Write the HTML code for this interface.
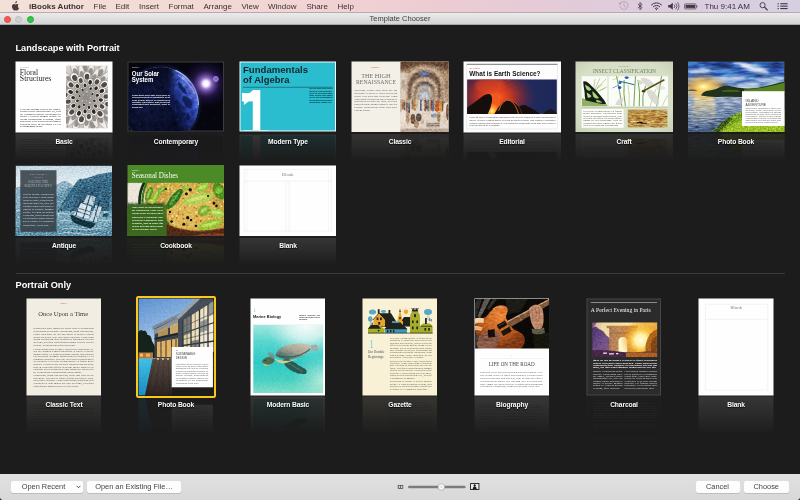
<!DOCTYPE html>
<html><head><meta charset="utf-8"><title>Template Chooser</title>
<style>
*{margin:0;padding:0;box-sizing:border-box}
html,body{width:800px;height:500px;overflow:hidden;background:#1c1c1c;font-family:"Liberation Sans",sans-serif;}
#root{position:absolute;left:0;top:0;width:800px;height:500px;will-change:transform;overflow:hidden}
#menubar{position:absolute;left:0;top:0;width:800px;height:13px;background:linear-gradient(90deg,#f3e1d8 0%,#f2dbd5 20%,#f1d3d3 40%,#ecccd3 55%,#e3cbd8 70%,#dacde0 85%,#d6cfe2 100%);border-bottom:1px solid #b9a9ad;}
#menubar span{position:absolute;top:1.5px;font-size:8px;line-height:10px;color:#3b3033;white-space:nowrap;}
#menubar span.b{font-weight:bold;}
#titlebar{position:absolute;left:0;top:13px;width:800px;height:12px;background:linear-gradient(#ebebeb,#d3d3d3);border-bottom:1px solid #a8a8a8;}
#titlebar .t{position:absolute;left:0;width:800px;text-align:center;top:1px;font-size:7.5px;line-height:10px;color:#404040;}
.tl{position:absolute;top:2.5px;width:7px;height:7px;border-radius:50%;}
#content{position:absolute;left:0;top:25px;width:800px;height:449px;background:#1c1c1c;}
h2{position:absolute;left:15.5px;font-size:9.2px;font-weight:bold;color:#fff;line-height:12px;white-space:nowrap;}
#sep{position:absolute;left:16px;top:247.5px;width:769px;height:1px;background:#3b3b3b;}
.th{position:absolute;-webkit-box-reflect:below 0 linear-gradient(to bottom,rgba(255,255,255,0) 0%,rgba(255,255,255,0) 60%,rgba(255,255,255,0.12) 100%);}
.th svg{display:block}
.land{width:97px;height:71px;}
.port{width:75px;height:97px;}
.lbl{position:absolute;font-size:6.7px;font-weight:bold;color:#fbfbfb;text-align:center;line-height:9px;white-space:nowrap;text-shadow:0 0.5px 1px rgba(0,0,0,0.8);letter-spacing:-0.12px;}
#bottombar{position:absolute;left:0;top:474px;width:800px;height:26px;background:linear-gradient(#e1e1e1,#d8d8d8);border-radius:0 0 3px 3px;}
.btn{position:absolute;top:6.5px;height:12px;background:#fdfdfd;border-radius:2px;box-shadow:0 0.5px 0.5px rgba(0,0,0,0.25);font-size:7.4px;line-height:12px;color:#444;text-align:center;white-space:nowrap;}
</style></head>
<body>
<div id="root">
<div id="menubar">
<svg style="position:absolute;left:11px;top:1px" width="9" height="10" viewBox="0 0 9 10"><path d="M6.1 0.1c0.05 0.6-0.2 1.15-0.55 1.55-0.35 0.4-0.9 0.7-1.4 0.65-0.07-0.55 0.2-1.1 0.5-1.45C5 0.45 5.6 0.15 6.1 0.1zM7.9 3.5c-0.1 0.05-1.05 0.6-1.05 1.75 0 1.35 1.2 1.8 1.2 1.8 0 0.05-0.2 0.65-0.6 1.3C7.05 8.9 6.7 9.5 6.1 9.5c-0.55 0-0.75-0.35-1.4-0.35-0.65 0-0.85 0.35-1.4 0.35-0.55 0-0.95-0.55-1.35-1.15C1.1 7.15 0.6 5.3 1.3 4.1c0.35-0.65 1-1.05 1.7-1.05 0.55 0 1.05 0.4 1.4 0.4 0.3 0 0.9-0.45 1.6-0.4 0.3 0 1.1 0.1 1.6 0.85z" fill="#4a3c3e"/></svg>
<span class="b" style="left:29px">iBooks Author</span>
<span style="left:93.5px">File</span>
<span style="left:115.5px">Edit</span>
<span style="left:139px">Insert</span>
<span style="left:168.5px">Format</span>
<span style="left:203.5px">Arrange</span>
<span style="left:241.5px">View</span>
<span style="left:268px">Window</span>
<span style="left:306.5px">Share</span>
<span style="left:337.5px">Help</span>
<span style="left:704.5px">Thu 9:41 AM</span>
<svg style="position:absolute;left:616px;top:0" width="176" height="13" viewBox="616 0 176 13">
<g fill="none" stroke="#b3a3ab" stroke-width="0.9" stroke-linecap="round"><path d="M620.3 3.6 A4.1 4.1 0 1 1 620 6.6"/><path d="M624 3.2 V5.7 L625.9 7"/></g><path d="M618.6 2.6 L621.6 2.9 L620 5.4Z" fill="#b3a3ab"/>
<path d="M637.8 4 L642 7.6 L640 9.8 V2.4 L642 4.5 L637.8 8.2" fill="none" stroke="#43383c" stroke-width="0.8" stroke-linejoin="round"/>
<g fill="none" stroke="#43383c" stroke-width="1" stroke-linecap="butt"><path d="M651.2 5.2 A7.2 7.2 0 0 1 661.8 5.2"/><path d="M653 7 A4.8 4.8 0 0 1 660 7"/><path d="M654.9 8.6 A2.4 2.4 0 0 1 658.1 8.6"/></g><circle cx="656.5" cy="9.6" r="0.7" fill="#43383c"/>
<path d="M668.2 5 H670 L672.8 2.8 V9.8 L670 7.6 H668.2Z" fill="#43383c"/><g fill="none" stroke="#43383c" stroke-width="0.75" stroke-linecap="round"><path d="M674.4 4.9 A2 2 0 0 1 674.4 7.7"/><path d="M676 3.7 A3.8 3.8 0 0 1 676 8.9"/><path d="M677.7 2.6 A5.6 5.6 0 0 1 677.7 10"/></g>
<rect x="684.6" y="3.9" width="11.4" height="5" rx="0.8" fill="none" stroke="#43383c" stroke-width="0.7"/><rect x="685.6" y="4.9" width="9.4" height="3" fill="#43383c"/><rect x="696.4" y="5.4" width="0.9" height="2" rx="0.3" fill="#43383c"/>
<circle cx="762.6" cy="5.2" r="2.6" fill="none" stroke="#43383c" stroke-width="0.9"/><path d="M764.5 7.2 L767.3 10" stroke="#43383c" stroke-width="1.1" stroke-linecap="round"/>
<g fill="#43383c"><rect x="777.6" y="3.2" width="1.2" height="1.1"/><rect x="777.6" y="5.6" width="1.2" height="1.1"/><rect x="777.6" y="8" width="1.2" height="1.1"/><rect x="780.3" y="3.2" width="7.3" height="1.1"/><rect x="780.3" y="5.6" width="7.3" height="1.1"/><rect x="780.3" y="8" width="7.3" height="1.1"/></g>
</svg>

</div>
<div id="titlebar">
<div class="tl" style="left:4px;background:#fc5753;border:0.5px solid #df4744"></div>
<div class="tl" style="left:15px;background:#d0d0d0;border:0.5px solid #bdbdbd"></div>
<div class="tl" style="left:26.5px;background:#33c748;border:0.5px solid #27aa35"></div>
<div class="t">Template Chooser</div>
</div>
<div id="content">
<h2 style="top:17px">Landscape with Portrait</h2>
<h2 style="top:254px">Portrait Only</h2>
<div id="sep"></div>
</div>
<div class="th" style="left:15px;top:61px;width:98px;height:72px"><svg width="98" height="72" viewBox="15 61 98 72"><defs><clipPath id="c1"><rect x="66" y="65.7" width="41.7" height="62.5"/></clipPath><radialGradient id="g1" cx="0.48" cy="0.5" r="0.7"><stop offset="0" stop-color="#8e8882"/><stop offset="0.5" stop-color="#b9b4ae"/><stop offset="1" stop-color="#dedad5"/></radialGradient><filter id="b1"><feGaussianBlur stdDeviation="0.3"/></filter></defs><rect x="15.5" y="61.5" width="97" height="71" fill="#fefefe"/><rect x="66" y="65.7" width="41.7" height="62.5" fill="url(#g1)"/><g clip-path="url(#c1)"><g filter="url(#b1)"><g transform="translate(52.38 96.04) rotate(10622.5)"><path d="M-8.44 0 Q-2.25 -7.03 12.38 0 Q-2.25 7.03 -8.44 0Z" fill="#efedea" stroke="#857e78" stroke-width="0.45"/><ellipse cx="-3.10" rx="4.22" ry="2.53" fill="#5b534e" opacity="0.6"/></g><g transform="translate(109.92 121.19) rotate(10485.0)"><path d="M-8.37 0 Q-2.23 -6.97 12.27 0 Q-2.23 6.97 -8.37 0Z" fill="#efedea" stroke="#857e78" stroke-width="0.45"/><ellipse cx="-3.07" rx="4.18" ry="2.51" fill="#5b534e" opacity="0.6"/></g><g transform="translate(84.73 64.34) rotate(10347.5)"><path d="M-8.29 0 Q-2.21 -6.91 12.16 0 Q-2.21 6.91 -8.29 0Z" fill="#efedea" stroke="#857e78" stroke-width="0.45"/><ellipse cx="-3.04" rx="4.15" ry="2.49" fill="#5b534e" opacity="0.6"/></g><g transform="translate(65.09 122.70) rotate(10210.0)"><path d="M-8.22 0 Q-2.19 -6.85 12.06 0 Q-2.19 6.85 -8.22 0Z" fill="#efedea" stroke="#857e78" stroke-width="0.45"/><ellipse cx="-3.01" rx="4.11" ry="2.47" fill="#5b534e" opacity="0.6"/></g><g transform="translate(118.46 93.22) rotate(10072.4)"><path d="M-8.15 0 Q-2.17 -6.79 11.95 0 Q-2.17 6.79 -8.15 0Z" fill="#efedea" stroke="#857e78" stroke-width="0.45"/><ellipse cx="-2.99" rx="4.07" ry="2.44" fill="#5b534e" opacity="0.6"/></g><g transform="translate(59.80 79.06) rotate(9934.9)"><path d="M-8.07 0 Q-2.15 -6.73 11.84 0 Q-2.15 6.73 -8.07 0Z" fill="#efedea" stroke="#857e78" stroke-width="0.45"/><ellipse cx="-2.96" rx="4.04" ry="2.42" fill="#5b534e" opacity="0.6"/></g><g transform="translate(93.14 128.61) rotate(9797.4)"><path d="M-8.00 0 Q-2.13 -6.66 11.73 0 Q-2.13 6.66 -8.00 0Z" fill="#efedea" stroke="#857e78" stroke-width="0.45"/><ellipse cx="-2.93" rx="4.00" ry="2.40" fill="#5b534e" opacity="0.6"/></g><g transform="translate(101.93 70.16) rotate(9659.9)"><path d="M-7.92 0 Q-2.11 -6.60 11.62 0 Q-2.11 6.60 -7.92 0Z" fill="#efedea" stroke="#857e78" stroke-width="0.45"/><ellipse cx="-2.90" rx="3.96" ry="2.38" fill="#5b534e" opacity="0.6"/></g><g transform="translate(56.45 106.93) rotate(9522.4)"><path d="M-7.85 0 Q-2.09 -6.54 11.51 0 Q-2.09 6.54 -7.85 0Z" fill="#efedea" stroke="#857e78" stroke-width="0.45"/><ellipse cx="-2.88" rx="3.92" ry="2.35" fill="#5b534e" opacity="0.6"/></g><g transform="translate(114.20 110.50) rotate(9384.9)"><path d="M-7.77 0 Q-2.07 -6.48 11.40 0 Q-2.07 6.48 -7.77 0Z" fill="#efedea" stroke="#857e78" stroke-width="0.45"/><ellipse cx="-2.85" rx="3.89" ry="2.33" fill="#5b534e" opacity="0.6"/></g><g transform="translate(74.46 69.31) rotate(9247.4)"><path d="M-7.70 0 Q-2.05 -6.41 11.29 0 Q-2.05 6.41 -7.70 0Z" fill="#efedea" stroke="#857e78" stroke-width="0.45"/><ellipse cx="-2.82" rx="3.85" ry="2.31" fill="#5b534e" opacity="0.6"/></g><g transform="translate(75.93 125.90) rotate(9109.9)"><path d="M-7.62 0 Q-2.03 -6.35 11.18 0 Q-2.03 6.35 -7.62 0Z" fill="#efedea" stroke="#857e78" stroke-width="0.45"/><ellipse cx="-2.79" rx="3.81" ry="2.29" fill="#5b534e" opacity="0.6"/></g><g transform="translate(112.66 83.66) rotate(8972.4)"><path d="M-7.54 0 Q-2.01 -6.29 11.06 0 Q-2.01 6.29 -7.54 0Z" fill="#efedea" stroke="#857e78" stroke-width="0.45"/><ellipse cx="-2.77" rx="3.77" ry="2.26" fill="#5b534e" opacity="0.6"/></g><g transform="translate(57.67 89.92) rotate(8834.9)"><path d="M-7.47 0 Q-1.99 -6.22 10.95 0 Q-1.99 6.22 -7.47 0Z" fill="#efedea" stroke="#857e78" stroke-width="0.45"/><ellipse cx="-2.74" rx="3.73" ry="2.24" fill="#5b534e" opacity="0.6"/></g><g transform="translate(101.93 122.07) rotate(8697.4)"><path d="M-7.39 0 Q-1.97 -6.16 10.84 0 Q-1.97 6.16 -7.39 0Z" fill="#efedea" stroke="#857e78" stroke-width="0.45"/><ellipse cx="-2.71" rx="3.69" ry="2.22" fill="#5b534e" opacity="0.6"/></g><g transform="translate(91.14 69.09) rotate(8559.9)"><path d="M-7.31 0 Q-1.95 -6.09 10.73 0 Q-1.95 6.09 -7.31 0Z" fill="#efedea" stroke="#857e78" stroke-width="0.45"/><ellipse cx="-2.68" rx="3.66" ry="2.19" fill="#5b534e" opacity="0.6"/></g><g transform="translate(63.64 114.90) rotate(8422.4)"><path d="M-7.24 0 Q-1.93 -6.03 10.61 0 Q-1.93 6.03 -7.24 0Z" fill="#efedea" stroke="#857e78" stroke-width="0.45"/><ellipse cx="-2.65" rx="3.62" ry="2.17" fill="#5b534e" opacity="0.6"/></g><g transform="translate(114.24 99.88) rotate(8284.8)"><path d="M-7.16 0 Q-1.91 -5.96 10.50 0 Q-1.91 5.96 -7.16 0Z" fill="#efedea" stroke="#857e78" stroke-width="0.45"/><ellipse cx="-2.62" rx="3.58" ry="2.15" fill="#5b534e" opacity="0.6"/></g><g transform="translate(67.36 77.06) rotate(8147.3)"><path d="M-7.08 0 Q-1.89 -5.90 10.38 0 Q-1.89 5.90 -7.08 0Z" fill="#efedea" stroke="#857e78" stroke-width="0.45"/><ellipse cx="-2.60" rx="3.54" ry="2.12" fill="#5b534e" opacity="0.6"/></g><g transform="translate(86.28 124.95) rotate(8009.8)"><path d="M-7.00 0 Q-1.87 -5.83 10.27 0 Q-1.87 5.83 -7.00 0Z" fill="#efedea" stroke="#857e78" stroke-width="0.45"/><ellipse cx="-2.57" rx="3.50" ry="2.10" fill="#5b534e" opacity="0.6"/></g><g transform="translate(104.44 77.47) rotate(7872.3)"><path d="M-6.92 0 Q-1.85 -5.77 10.15 0 Q-1.85 5.77 -6.92 0Z" fill="#efedea" stroke="#857e78" stroke-width="0.45"/><ellipse cx="-2.54" rx="3.46" ry="2.08" fill="#5b534e" opacity="0.6"/></g><g transform="translate(59.57 99.92) rotate(7734.8)"><path d="M-6.84 0 Q-1.82 -5.70 10.03 0 Q-1.82 5.70 -6.84 0Z" fill="#efedea" stroke="#857e78" stroke-width="0.45"/><ellipse cx="-2.51" rx="3.42" ry="2.05" fill="#5b534e" opacity="0.6"/></g><g transform="translate(107.19 113.49) rotate(7597.3)"><path d="M-6.76 0 Q-1.80 -5.64 9.92 0 Q-1.80 5.64 -6.76 0Z" fill="#efedea" stroke="#857e78" stroke-width="0.45"/><ellipse cx="-2.48" rx="3.38" ry="2.03" fill="#5b534e" opacity="0.6"/></g><g transform="translate(81.59 71.88) rotate(7459.8)"><path d="M-6.68 0 Q-1.78 -5.57 9.80 0 Q-1.78 5.57 -6.68 0Z" fill="#efedea" stroke="#857e78" stroke-width="0.45"/><ellipse cx="-2.45" rx="3.34" ry="2.00" fill="#5b534e" opacity="0.6"/></g><g transform="translate(72.48 119.20) rotate(7322.3)"><path d="M-6.60 0 Q-1.76 -5.50 9.68 0 Q-1.76 5.50 -6.60 0Z" fill="#efedea" stroke="#857e78" stroke-width="0.45"/><ellipse cx="-2.42" rx="3.30" ry="1.98" fill="#5b534e" opacity="0.6"/></g><g transform="translate(110.63 90.85) rotate(7184.8)"><path d="M-6.52 0 Q-1.74 -5.43 9.56 0 Q-1.74 5.43 -6.52 0Z" fill="#efedea" stroke="#857e78" stroke-width="0.45"/><ellipse cx="-2.39" rx="3.26" ry="1.96" fill="#5b534e" opacity="0.6"/></g><g transform="translate(64.02 86.07) rotate(7047.3)"><path d="M-6.44 0 Q-1.72 -5.37 9.44 0 Q-1.72 5.37 -6.44 0Z" fill="#efedea" stroke="#857e78" stroke-width="0.45"/><ellipse cx="-2.36" rx="3.22" ry="1.93" fill="#5b534e" opacity="0.6"/></g><g transform="translate(94.71 120.57) rotate(6909.8)"><path d="M-6.36 0 Q-1.70 -5.30 9.33 0 Q-1.70 5.30 -6.36 0Z" fill="#efedea" stroke="#857e78" stroke-width="0.45"/><ellipse cx="-2.33" rx="3.18" ry="1.91" fill="#5b534e" opacity="0.6"/></g><g transform="translate(95.38 75.08) rotate(6772.3)"><path d="M-6.28 0 Q-1.67 -5.23 9.20 0 Q-1.67 5.23 -6.28 0Z" fill="#efedea" stroke="#857e78" stroke-width="0.45"/><ellipse cx="-2.30" rx="3.14" ry="1.88" fill="#5b534e" opacity="0.6"/></g><g transform="translate(64.62 107.68) rotate(6634.8)"><path d="M-6.19 0 Q-1.65 -5.16 9.08 0 Q-1.65 5.16 -6.19 0Z" fill="#efedea" stroke="#857e78" stroke-width="0.45"/><ellipse cx="-2.27" rx="3.10" ry="1.86" fill="#5b534e" opacity="0.6"/></g><g transform="translate(108.63 104.46) rotate(6497.2)"><ellipse rx="4.97" ry="4.16" fill="#f8f7f4" stroke="#6f6862" stroke-width="0.45"/><ellipse cx="-0.49" rx="3.18" ry="2.53" fill="#241f1c" opacity="0.8"/></g><g transform="translate(74.55 77.53) rotate(6359.7)"><ellipse rx="4.90" ry="4.10" fill="#f8f7f4" stroke="#6f6862" stroke-width="0.45"/><ellipse cx="-0.48" rx="3.13" ry="2.49" fill="#241f1c" opacity="0.8"/></g><g transform="translate(81.38 119.73) rotate(6222.2)"><ellipse rx="4.83" ry="4.04" fill="#f8f7f4" stroke="#6f6862" stroke-width="0.45"/><ellipse cx="-0.48" rx="3.09" ry="2.46" fill="#241f1c" opacity="0.8"/></g><g transform="translate(104.46 84.58) rotate(6084.7)"><ellipse rx="4.76" ry="3.98" fill="#f8f7f4" stroke="#6f6862" stroke-width="0.45"/><ellipse cx="-0.47" rx="3.05" ry="2.42" fill="#241f1c" opacity="0.8"/></g><g transform="translate(64.38 94.74) rotate(5947.2)"><ellipse rx="4.70" ry="3.93" fill="#f8f7f4" stroke="#6f6862" stroke-width="0.45"/><ellipse cx="-0.46" rx="3.00" ry="2.39" fill="#241f1c" opacity="0.8"/></g><g transform="translate(100.18 113.99) rotate(5809.7)"><ellipse rx="4.63" ry="3.87" fill="#f8f7f4" stroke="#6f6862" stroke-width="0.45"/><ellipse cx="-0.46" rx="2.96" ry="2.35" fill="#241f1c" opacity="0.8"/></g><g transform="translate(87.01 76.28) rotate(5672.2)"><ellipse rx="4.56" ry="3.81" fill="#f8f7f4" stroke="#6f6862" stroke-width="0.45"/><ellipse cx="-0.45" rx="2.91" ry="2.32" fill="#241f1c" opacity="0.8"/></g><g transform="translate(71.54 112.32) rotate(5534.7)"><ellipse rx="4.49" ry="3.75" fill="#f8f7f4" stroke="#6f6862" stroke-width="0.45"/><ellipse cx="-0.44" rx="2.87" ry="2.28" fill="#241f1c" opacity="0.8"/></g><g transform="translate(106.64 96.49) rotate(5397.2)"><ellipse rx="4.42" ry="3.69" fill="#f8f7f4" stroke="#6f6862" stroke-width="0.45"/><ellipse cx="-0.43" rx="2.82" ry="2.24" fill="#241f1c" opacity="0.8"/></g><g transform="translate(70.75 84.69) rotate(5259.7)"><ellipse rx="4.34" ry="3.63" fill="#f8f7f4" stroke="#6f6862" stroke-width="0.45"/><ellipse cx="-0.43" rx="2.78" ry="2.21" fill="#241f1c" opacity="0.8"/></g><g transform="translate(88.88 117.00) rotate(5122.2)"><ellipse rx="4.27" ry="3.57" fill="#f8f7f4" stroke="#6f6862" stroke-width="0.45"/><ellipse cx="-0.42" rx="2.73" ry="2.17" fill="#241f1c" opacity="0.8"/></g><g transform="translate(97.17 81.64) rotate(4984.7)"><ellipse rx="4.20" ry="3.51" fill="#f8f7f4" stroke="#6f6862" stroke-width="0.45"/><ellipse cx="-0.41" rx="2.69" ry="2.13" fill="#241f1c" opacity="0.8"/></g><g transform="translate(67.79 101.70) rotate(4847.1)"><ellipse rx="4.13" ry="3.45" fill="#f8f7f4" stroke="#6f6862" stroke-width="0.45"/><ellipse cx="-0.41" rx="2.64" ry="2.10" fill="#241f1c" opacity="0.8"/></g><g transform="translate(102.27 106.64) rotate(4709.6)"><ellipse rx="4.05" ry="3.39" fill="#f8f7f4" stroke="#6f6862" stroke-width="0.45"/><ellipse cx="-0.40" rx="2.59" ry="2.06" fill="#241f1c" opacity="0.8"/></g><g transform="translate(80.65 80.29) rotate(4572.1)"><ellipse rx="3.98" ry="3.33" fill="#f8f7f4" stroke="#6f6862" stroke-width="0.45"/><ellipse cx="-0.39" rx="2.54" ry="2.02" fill="#241f1c" opacity="0.8"/></g><g transform="translate(78.84 113.57) rotate(4434.6)"><ellipse rx="3.91" ry="3.27" fill="#f8f7f4" stroke="#6f6862" stroke-width="0.45"/><ellipse cx="-0.38" rx="2.50" ry="1.98" fill="#241f1c" opacity="0.95"/></g><g transform="translate(102.11 90.79) rotate(4297.1)"><ellipse rx="3.83" ry="3.20" fill="#f8f7f4" stroke="#6f6862" stroke-width="0.45"/><ellipse cx="-0.38" rx="2.45" ry="1.95" fill="#241f1c" opacity="0.95"/></g><g transform="translate(70.33 91.84) rotate(4159.6)"><ellipse rx="3.75" ry="3.14" fill="#f8f7f4" stroke="#6f6862" stroke-width="0.45"/><ellipse cx="-0.37" rx="2.40" ry="1.91" fill="#241f1c" opacity="0.95"/></g><g transform="translate(93.89 112.02) rotate(4022.1)"><ellipse rx="3.68" ry="3.08" fill="#f8f7f4" stroke="#6f6862" stroke-width="0.45"/><ellipse cx="-0.36" rx="2.35" ry="1.87" fill="#241f1c" opacity="0.95"/></g><g transform="translate(90.23 82.01) rotate(3884.6)"><ellipse rx="3.60" ry="3.01" fill="#f8f7f4" stroke="#6f6862" stroke-width="0.45"/><ellipse cx="-0.35" rx="2.30" ry="1.83" fill="#241f1c" opacity="0.95"/></g><g transform="translate(73.12 105.97) rotate(3747.1)"><ellipse rx="3.52" ry="2.95" fill="#f8f7f4" stroke="#6f6862" stroke-width="0.45"/><ellipse cx="-0.35" rx="2.25" ry="1.79" fill="#241f1c" opacity="0.95"/></g><g transform="translate(101.15 100.02) rotate(3609.6)"><ellipse rx="3.44" ry="2.88" fill="#f8f7f4" stroke="#6f6862" stroke-width="0.45"/><ellipse cx="-0.34" rx="2.20" ry="1.75" fill="#241f1c" opacity="0.95"/></g><g transform="translate(77.15 85.89) rotate(3472.1)"><ellipse rx="3.37" ry="2.81" fill="#f8f7f4" stroke="#6f6862" stroke-width="0.45"/><ellipse cx="-0.33" rx="2.15" ry="1.71" fill="#241f1c" opacity="0.95"/></g><g transform="translate(85.06 111.74) rotate(3334.6)"><ellipse rx="3.29" ry="2.75" fill="#f8f7f4" stroke="#6f6862" stroke-width="0.45"/><ellipse cx="-0.32" rx="2.10" ry="1.67" fill="#241f1c" opacity="0.95"/></g><g transform="translate(96.33 88.07) rotate(3197.1)"><ellipse rx="3.20" ry="2.68" fill="#f8f7f4" stroke="#6f6862" stroke-width="0.45"/><ellipse cx="-0.32" rx="2.05" ry="1.63" fill="#241f1c" opacity="0.95"/></g><g transform="translate(72.81 97.61) rotate(3059.5)"><ellipse rx="3.12" ry="2.61" fill="#f8f7f4" stroke="#6f6862" stroke-width="0.45"/><ellipse cx="-0.31" rx="2.00" ry="1.59" fill="#241f1c" opacity="0.95"/></g><g transform="translate(95.81 106.17) rotate(2922.0)"><ellipse rx="3.04" ry="2.54" fill="#f8f7f4" stroke="#6f6862" stroke-width="0.45"/><ellipse cx="-0.30" rx="1.94" ry="1.54" fill="#241f1c" opacity="0.95"/></g><g transform="translate(85.01 85.07) rotate(2784.5)"><ellipse rx="2.96" ry="2.47" fill="#f8f7f4" stroke="#6f6862" stroke-width="0.45"/><ellipse cx="-0.29" rx="1.89" ry="1.50" fill="#241f1c" opacity="0.95"/></g><g transform="translate(78.96 107.09) rotate(2647.0)"><ellipse rx="2.87" ry="2.40" fill="#f8f7f4" stroke="#6f6862" stroke-width="0.45"/><ellipse cx="-0.28" rx="1.84" ry="1.46" fill="#241f1c" opacity="0.95"/></g><g transform="translate(97.55 95.40) rotate(2509.5)"><ellipse rx="2.78" ry="2.33" fill="#f8f7f4" stroke="#6f6862" stroke-width="0.45"/><ellipse cx="-0.27" rx="1.78" ry="1.41" fill="#241f1c" opacity="0.95"/></g><g transform="translate(76.81 91.63) rotate(2372.0)"><ellipse rx="2.70" ry="2.25" fill="#f8f7f4" stroke="#6f6862" stroke-width="0.45"/><ellipse cx="-0.27" rx="1.72" ry="1.37" fill="#241f1c" opacity="0.95"/></g><g transform="translate(89.03 107.70) rotate(2234.5)"><ellipse rx="2.61" ry="2.18" fill="#f8f7f4" stroke="#6f6862" stroke-width="0.45"/><ellipse cx="-0.26" rx="1.67" ry="1.33" fill="#241f1c" opacity="0.95"/></g><g transform="translate(90.78 88.51) rotate(2097.0)"><ellipse rx="2.52" ry="2.10" fill="#f8f7f4" stroke="#6f6862" stroke-width="0.45"/><ellipse cx="-0.25" rx="1.61" ry="1.28" fill="#241f1c" opacity="0.95"/></g><g transform="translate(77.22 100.86) rotate(1959.5)"><ellipse rx="2.43" ry="2.03" fill="#f8f7f4" stroke="#6f6862" stroke-width="0.45"/><ellipse cx="-0.24" rx="1.55" ry="1.23" fill="#241f1c" opacity="0.95"/></g><g transform="translate(94.62 100.90) rotate(1822.0)"><ellipse rx="2.33" ry="1.95" fill="#f8f7f4" stroke="#6f6862" stroke-width="0.45"/><ellipse cx="-0.23" rx="1.49" ry="1.18" fill="#241f1c" opacity="0.95"/></g><g transform="translate(82.51 89.78) rotate(1684.5)"><ellipse rx="2.24" ry="1.87" fill="#f8f7f4" stroke="#6f6862" stroke-width="0.45"/><ellipse cx="-0.22" rx="1.43" ry="1.14" fill="#241f1c" opacity="0.95"/></g><g transform="translate(83.86 105.17) rotate(1547.0)"><ellipse rx="2.14" ry="1.79" fill="#f8f7f4" stroke="#6f6862" stroke-width="0.45"/><ellipse cx="-0.21" rx="1.37" ry="1.09" fill="#241f1c" opacity="0.95"/></g><g transform="translate(92.64 93.70) rotate(1409.5)"><ellipse rx="2.04" ry="1.70" fill="#f8f7f4" stroke="#6f6862" stroke-width="0.45"/><ellipse cx="-0.20" rx="1.30" ry="1.04" fill="#241f1c" opacity="0.95"/></g><g transform="translate(79.44 96.07) rotate(1271.9)"><ellipse rx="1.94" ry="1.62" fill="#f8f7f4" stroke="#6f6862" stroke-width="0.45"/><ellipse cx="-0.19" rx="1.24" ry="0.98" fill="#241f1c" opacity="0.95"/></g><circle cx="89.88" cy="102.65" r="1.28" fill="#e4e1dc" stroke="#6d665f" stroke-width="0.45"/><circle cx="86.89" cy="91.80" r="1.20" fill="#e4e1dc" stroke="#6d665f" stroke-width="0.45"/><circle cx="82.31" cy="100.83" r="1.12" fill="#e4e1dc" stroke="#6d665f" stroke-width="0.45"/><circle cx="90.67" cy="97.65" r="1.04" fill="#e4e1dc" stroke="#6d665f" stroke-width="0.45"/><circle cx="83.49" cy="94.85" r="0.95" fill="#e4e1dc" stroke="#6d665f" stroke-width="0.45"/><circle cx="86.37" cy="100.56" r="0.86" fill="#e4e1dc" stroke="#6d665f" stroke-width="0.45"/><circle cx="87.64" cy="95.74" r="0.76" fill="#e4e1dc" stroke="#6d665f" stroke-width="0.45"/></g></g><text x="20" y="67.8" font-family='"Liberation Sans",sans-serif' font-size="1.6" fill="#999">CHAPTER 1</text><g font-family='"Liberation Serif",serif' font-size="7.8" fill="#262626"><text x="19.8" y="74.6" textLength="18.2" lengthAdjust="spacingAndGlyphs">Floral</text><text x="19.8" y="81.4" textLength="31.6" lengthAdjust="spacingAndGlyphs">Structures</text></g><g font-family='"Liberation Serif",serif' font-size="2.5" fill="#1a1a1a" font-weight="normal" opacity="1"><text x="20.00" y="110.00" textLength="41.00" lengthAdjust="spacingAndGlyphs">Lorem ipsum dolor sit amet,</text><text x="20.00" y="112.47" textLength="41.00" lengthAdjust="spacingAndGlyphs">consectetur adipiscing elit, sed</text><text x="20.00" y="114.94" textLength="41.00" lengthAdjust="spacingAndGlyphs">do eiusmod tempor incididunt ut</text><text x="20.00" y="117.41" textLength="41.00" lengthAdjust="spacingAndGlyphs">labore et dolore magna aliqua. Ut</text><text x="20.00" y="119.89" textLength="41.00" lengthAdjust="spacingAndGlyphs">enim ad minim veniam, quis</text><text x="20.00" y="122.36" textLength="41.00" lengthAdjust="spacingAndGlyphs">nostrud exercitation ullamco</text><text x="20.00" y="124.83" textLength="41.00" lengthAdjust="spacingAndGlyphs">laboris nisi ut aliquip ex ea</text><text x="20.00" y="127.30" textLength="22.55" lengthAdjust="spacingAndGlyphs">commodo</text></g></svg></div>
<div class="lbl" style="left:24.0px;top:136.9px;width:80px">Basic</div>
<div class="th" style="left:127px;top:61px;width:98px;height:72px"><svg width="98" height="72" viewBox="127 61 98 72"><defs><clipPath id="c2"><rect x="128.5" y="62.5" width="94.5" height="68.5"/></clipPath><clipPath id="c2e"><circle cx="160.5" cy="105" r="38"/></clipPath><linearGradient id="g2e" gradientUnits="userSpaceOnUse" x1="166" y1="112" x2="199" y2="92"><stop offset="0" stop-color="#0b1030"/><stop offset="0.3" stop-color="#131c54"/><stop offset="0.55" stop-color="#253a98"/><stop offset="0.8" stop-color="#4262d0"/><stop offset="1" stop-color="#7e9af0"/></linearGradient><radialGradient id="g2d" gradientUnits="userSpaceOnUse" cx="150" cy="100" r="45"><stop offset="0" stop-color="#10173e"/><stop offset="0.6" stop-color="#0a0f2a"/><stop offset="1" stop-color="#06081a"/></radialGradient><radialGradient id="g2s" gradientUnits="userSpaceOnUse" cx="206" cy="83.6" r="24"><stop offset="0" stop-color="#ffffff"/><stop offset="0.12" stop-color="#f6eeff"/><stop offset="0.26" stop-color="#a87ae4" stop-opacity="0.8"/><stop offset="0.55" stop-color="#5634a8" stop-opacity="0.32"/><stop offset="1" stop-color="#201050" stop-opacity="0"/></radialGradient><radialGradient id="g2f" gradientUnits="userSpaceOnUse" cx="215.8" cy="79" r="3.6"><stop offset="0" stop-color="#8a70d0" stop-opacity="0.7"/><stop offset="0.7" stop-color="#a488e8" stop-opacity="0.9"/><stop offset="1" stop-color="#402080" stop-opacity="0"/></radialGradient><filter id="b2"><feGaussianBlur stdDeviation="0.6"/></filter><filter id="b2b"><feGaussianBlur stdDeviation="1.6"/></filter><filter id="b2c"><feGaussianBlur stdDeviation="3"/></filter><filter id="n2" x="0" y="0" width="1" height="1" color-interpolation-filters="sRGB"><feOffset in="SourceGraphic" result="s"/><feTurbulence type="fractalNoise" baseFrequency="0.22" numOctaves="4" seed="14" result="t"/><feColorMatrix in="t" type="matrix" values="0.6 0 0 0 0.200  0.6 0 0 0 0.200  0.6 0 0 0 0.200  0 0 0 0 1" result="g"/><feBlend in="g" in2="s" mode="overlay" result="b"/><feComposite in="b" in2="s" operator="in"/></filter></defs><rect x="127.5" y="61.5" width="96.5" height="70" fill="#3c3c3c"/><rect x="128.5" y="62.5" width="94.5" height="68" fill="#06060f"/><g clip-path="url(#c2)"><circle cx="161.5" cy="104.5" r="39" fill="#2c3ea0" opacity="0.35" filter="url(#b2b)"/><g filter="url(#n2)"><circle cx="160.5" cy="105" r="38" fill="url(#g2d)"/><g clip-path="url(#c2e)"><path d="M176 62 Q170 84 173 104 Q176 122 186 140 H215 V62Z" fill="url(#g2e)" filter="url(#b2c)"/></g></g><g clip-path="url(#c2e)"><g fill="#0c1440" opacity="0.75" filter="url(#b2)"><path d="M178 82 q4 1 5 5 q3 2 4 7 q-4 0 -6 -4 q-3 -3 -3 -8z"/><path d="M183 96 q5 0 8 4 q2 5 -1 9 q-5 -2 -6 -6 q-2 -3 -1 -7z"/><path d="M176 100 q4 3 5 9 q3 6 2 11 q-5 -3 -6 -9 q-2 -6 -1 -11z"/><path d="M187 112 q3 2 3 7 q-2 2 -4 0z"/></g><g stroke="#d4dcff" stroke-width="0.8" fill="none" opacity="0.7" filter="url(#b2)"><path d="M178 75 Q186 80 191 88"/><path d="M182 76.5 Q190 83 195 94"/></g></g><path d="M175.5 70.2 A38 38 0 0 1 198.5 105" fill="none" stroke="#c4d0ff" stroke-width="1.1" opacity="0.9" filter="url(#b2)"/><g fill="#8890c0"><circle cx="140" cy="124" r="0.3"/><circle cx="214" cy="118" r="0.3"/><circle cx="203" cy="124" r="0.25"/><circle cx="219" cy="100" r="0.3"/><circle cx="150" cy="65" r="0.25"/></g><rect x="128" y="62" width="96" height="70" fill="url(#g2s)"/><circle cx="215.8" cy="79" r="3.6" fill="url(#g2f)"/></g><text x="132" y="68.3" font-family='"Liberation Sans",sans-serif' font-size="1.7" fill="#cfd4ee">Chapter 1</text><g font-family='"Liberation Sans",sans-serif' font-size="6.4" font-weight="bold" fill="#fff"><text x="131.8" y="76.4" textLength="27.4" lengthAdjust="spacingAndGlyphs">Our Solar</text><text x="131.8" y="82.2" textLength="21.6" lengthAdjust="spacingAndGlyphs">System</text></g><g font-family='"Liberation Sans",sans-serif' font-size="2.2" fill="#fff" font-weight="bold" opacity="1"><text x="132.00" y="95.70" textLength="38.00" lengthAdjust="spacingAndGlyphs">consequat. Duis aute irure dolor in</text><text x="132.00" y="98.12" textLength="38.00" lengthAdjust="spacingAndGlyphs">reprehenderit in voluptate velit</text><text x="132.00" y="100.54" textLength="38.00" lengthAdjust="spacingAndGlyphs">esse cillum dolore eu fugiat nulla</text><text x="132.00" y="102.96" textLength="38.00" lengthAdjust="spacingAndGlyphs">pariatur. Excepteur sint occaecat</text><text x="132.00" y="105.38" textLength="38.00" lengthAdjust="spacingAndGlyphs">cupidatat non proident, sunt in</text><text x="132.00" y="107.80" textLength="10.64" lengthAdjust="spacingAndGlyphs">culpa qui</text></g></svg></div>
<div class="lbl" style="left:136.0px;top:136.9px;width:80px">Contemporary</div>
<div class="th" style="left:239px;top:61px;width:98px;height:72px"><svg width="98" height="72" viewBox="239 61 98 72"><defs><clipPath id="c3"><rect x="240.5" y="62.5" width="94.5" height="68"/></clipPath></defs><rect x="239.5" y="61.5" width="96.5" height="70" fill="#f4fbfc"/><rect x="240.5" y="62.5" width="94.5" height="68" fill="#29bdcf"/><g font-family='"Liberation Sans",sans-serif' font-size="9" font-weight="bold" fill="#15262b"><text x="243" y="72.8" textLength="65" lengthAdjust="spacingAndGlyphs">Fundamentals</text><text x="243" y="82.9" textLength="46.5" lengthAdjust="spacingAndGlyphs">of Algebra</text></g><rect x="243" y="86.9" width="89.4" height="0.5" fill="#15383f"/><rect x="242" y="93" width="11" height="8.4" fill="#fff"/><g clip-path="url(#c3)"><text x="240.3" y="136.6" font-family='"Liberation Sans",sans-serif' font-size="68" font-weight="bold" fill="#fff" textLength="30" lengthAdjust="spacingAndGlyphs">1</text></g><g font-family='"Liberation Sans",sans-serif' font-size="2.3" fill="#0d2a30" font-weight="bold" opacity="1"><text x="309.20" y="89.40" textLength="23.20" lengthAdjust="spacingAndGlyphs">officia deserunt mollit</text><text x="309.20" y="91.63" textLength="23.20" lengthAdjust="spacingAndGlyphs">anim id est laborum.</text><text x="309.20" y="93.87" textLength="23.20" lengthAdjust="spacingAndGlyphs">Sed ut perspiciatis</text><text x="309.20" y="96.10" textLength="23.20" lengthAdjust="spacingAndGlyphs">unde omnis iste natus</text><text x="309.20" y="98.33" textLength="23.20" lengthAdjust="spacingAndGlyphs">error sit voluptatem</text><text x="309.20" y="100.57" textLength="23.20" lengthAdjust="spacingAndGlyphs">accusantium doloremque</text><text x="309.20" y="102.80" textLength="22.04" lengthAdjust="spacingAndGlyphs">laudantium, totam rem</text></g></svg></div>
<div class="lbl" style="left:248.0px;top:136.9px;width:80px">Modern Type</div>
<div class="th" style="left:351px;top:61px;width:98px;height:72px"><svg width="98" height="72" viewBox="351 61 98 72"><defs><clipPath id="c4"><rect x="400.4" y="61.5" width="48.1" height="70.5"/></clipPath><linearGradient id="g4" x1="0" y1="0" x2="0" y2="1"><stop offset="0" stop-color="#7d5f49"/><stop offset="0.18" stop-color="#a58568"/><stop offset="0.5" stop-color="#c2a88e"/><stop offset="0.75" stop-color="#dfd0c0"/><stop offset="1" stop-color="#cbb9a6"/></linearGradient><filter id="b4"><feGaussianBlur stdDeviation="0.45"/></filter><filter id="b4b"><feGaussianBlur stdDeviation="0.8"/></filter><filter id="n4" x="0" y="0" width="1" height="1" color-interpolation-filters="sRGB"><feOffset in="SourceGraphic" result="s"/><feTurbulence type="fractalNoise" baseFrequency="0.45" numOctaves="3" seed="11" result="t"/><feColorMatrix in="t" type="matrix" values="0.5 0 0 0 0.250  0.5 0 0 0 0.250  0.5 0 0 0 0.250  0 0 0 0 1" result="g"/><feBlend in="g" in2="s" mode="overlay" result="b"/><feComposite in="b" in2="s" operator="in"/></filter></defs><rect x="351.5" y="61.5" width="97" height="70.5" fill="#f3f0e7"/><g clip-path="url(#c4)"><g filter="url(#n4)"><rect x="400" y="61" width="49" height="72" fill="url(#g4)"/><g filter="url(#b4b)"><path d="M400 61 H449 V72 Q440 64.5 424.5 64.5 Q409 64.5 400 72Z" fill="#5d4030" opacity="0.8"/><path d="M404 100 V86 A20.5 20 0 0 1 445 86 V100Z" fill="#6e5240"/><path d="M404 100 V86 A20.5 20 0 0 1 445 86 V100 H441.5 V87 A17 17 0 0 0 407.5 87 V100Z" fill="#cdb499"/><rect x="400" y="72" width="6.5" height="28" fill="#dccdbd"/><rect x="402" y="80" width="2.6" height="10" rx="1.2" fill="#a08a78"/><rect x="443.5" y="72" width="5.5" height="28" fill="#b39478"/><rect x="445" y="80" width="2.4" height="10" rx="1.2" fill="#8a6e58"/><path d="M411.5 100 V90 A13 12.5 0 0 1 437.5 90 V100Z" fill="#d4bda4"/><path d="M414 100 V91 A10.5 10.5 0 0 1 435 91 V100Z" fill="#77604e"/><path d="M416.5 100 V93.5 A8 8 0 0 1 432.5 93.5 V100Z" fill="#d6c6b2"/><path d="M418.5 100 V94.5 A6 6.5 0 0 1 430.5 94.5 V100Z" fill="#9c8c80"/><path d="M420.3 101 V96 A4.2 4.8 0 0 1 428.7 96 V101Z" fill="#c3cddc"/><ellipse cx="424.3" cy="73.8" rx="5" ry="1.7" fill="#5b7fc0"/><ellipse cx="424.5" cy="85.8" rx="3.4" ry="1.1" fill="#7f97c4"/></g><rect x="400" y="109" width="49" height="24" fill="#e2d4c6" filter="url(#b4)"/><g filter="url(#b4)"><path d="M400.20 101.80 Q400.82 99.70 401.45 101.80 L401.61 111.75 H400.04Z" fill="#b48c5c"/><circle cx="400.82" cy="100.10" r="0.8" fill="#c09a7a"/><path d="M402.26 102.23 Q403.04 100.13 403.81 102.23 L404.01 110.41 H402.06Z" fill="#a66450"/><circle cx="403.04" cy="100.53" r="0.8" fill="#c09a7a"/><path d="M403.91 102.37 Q404.54 100.27 405.17 102.37 L405.33 110.58 H403.75Z" fill="#5a7060"/><circle cx="404.54" cy="100.67" r="0.8" fill="#c09a7a"/><path d="M406.25 103.15 Q406.92 101.05 407.60 103.15 L407.77 111.53 H406.08Z" fill="#80493e"/><circle cx="406.92" cy="101.45" r="0.8" fill="#c09a7a"/><path d="M408.39 103.40 Q409.13 101.30 409.87 103.40 L410.05 113.13 H408.20Z" fill="#585668"/><circle cx="409.13" cy="101.70" r="0.8" fill="#c09a7a"/><path d="M410.77 99.79 Q411.48 97.69 412.18 99.79 L412.35 110.37 H410.60Z" fill="#dcd2c2"/><circle cx="411.48" cy="98.09" r="0.8" fill="#c09a7a"/><path d="M411.76 99.94 Q412.64 97.84 413.53 99.94 L413.75 108.86 H411.54Z" fill="#866a4a"/><circle cx="412.64" cy="98.24" r="0.8" fill="#c09a7a"/><path d="M413.95 100.86 Q414.68 98.76 415.41 100.86 L415.59 110.78 H413.77Z" fill="#bc8448"/><circle cx="414.68" cy="99.16" r="0.8" fill="#c09a7a"/><path d="M416.38 99.83 Q417.05 97.73 417.72 99.83 L417.89 108.00 H416.21Z" fill="#ccc0a4"/><circle cx="417.05" cy="98.13" r="0.8" fill="#c09a7a"/><path d="M418.38 100.56 Q419.18 98.46 419.99 100.56 L420.19 109.50 H418.17Z" fill="#e6ddd0"/><circle cx="419.18" cy="98.86" r="0.8" fill="#c09a7a"/><path d="M420.11 100.30 Q420.95 98.20 421.80 100.30 L422.01 110.68 H419.90Z" fill="#5a6a88"/><circle cx="420.95" cy="98.60" r="0.8" fill="#c09a7a"/><path d="M421.84 100.85 Q422.74 98.75 423.65 100.85 L423.88 110.42 H421.61Z" fill="#ded4c4"/><circle cx="422.74" cy="99.15" r="0.8" fill="#c09a7a"/><path d="M424.59 100.28 Q425.23 98.18 425.87 100.28 L426.03 111.22 H424.43Z" fill="#8c5044"/><circle cx="425.23" cy="98.58" r="0.8" fill="#c09a7a"/><path d="M426.15 101.21 Q426.92 99.11 427.69 101.21 L427.88 109.67 H425.95Z" fill="#6a5864"/><circle cx="426.92" cy="99.51" r="0.8" fill="#c09a7a"/><path d="M427.74 101.04 Q428.54 98.94 429.34 101.04 L429.54 111.33 H427.54Z" fill="#747c68"/><circle cx="428.54" cy="99.34" r="0.8" fill="#c09a7a"/><path d="M430.57 100.33 Q431.38 98.23 432.18 100.33 L432.39 110.41 H430.37Z" fill="#8c5444"/><circle cx="431.38" cy="98.63" r="0.8" fill="#c09a7a"/><path d="M432.15 100.61 Q433.08 98.51 434.01 100.61 L434.24 111.13 H431.92Z" fill="#64768c"/><circle cx="433.08" cy="98.91" r="0.8" fill="#c09a7a"/><path d="M434.13 101.03 Q434.97 98.93 435.82 101.03 L436.03 109.21 H433.92Z" fill="#b09c7c"/><circle cx="434.97" cy="99.33" r="0.8" fill="#c09a7a"/><path d="M436.45 101.69 Q437.15 99.59 437.85 101.69 L438.02 112.15 H436.27Z" fill="#b48c5c"/><circle cx="437.15" cy="99.99" r="0.8" fill="#c09a7a"/><path d="M438.12 101.04 Q438.89 98.94 439.65 101.04 L439.84 109.10 H437.93Z" fill="#a66450"/><circle cx="438.89" cy="99.34" r="0.8" fill="#c09a7a"/><path d="M439.80 101.73 Q440.67 99.63 441.54 101.73 L441.75 109.91 H439.58Z" fill="#5a7060"/><circle cx="440.67" cy="100.03" r="0.8" fill="#c09a7a"/><path d="M441.72 102.00 Q442.63 99.90 443.53 102.00 L443.76 111.17 H441.50Z" fill="#80493e"/><circle cx="442.63" cy="100.30" r="0.8" fill="#c09a7a"/><path d="M443.67 102.40 Q444.58 100.30 445.49 102.40 L445.72 112.05 H443.44Z" fill="#585668"/><circle cx="444.58" cy="100.70" r="0.8" fill="#c09a7a"/><path d="M446.57 103.23 Q447.32 101.13 448.06 103.23 L448.25 112.06 H446.39Z" fill="#dcd2c2"/><circle cx="447.32" cy="101.53" r="0.8" fill="#c09a7a"/><path d="M435.6 102 Q437 99.5 438.4 102 L439 111 H435Z" fill="#c4562e"/><path d="M439.2 102.5 Q440.5 100 441.8 102.5 L442.2 111.5 H438.8Z" fill="#d29a40"/><path d="M443.6 104 Q445.2 101.5 446.8 104 L447.4 115 H443Z" fill="#e9e1d6"/><ellipse cx="403.25" cy="116.5" rx="2.25" ry="7.5" fill="#ece4d8" opacity="0.9"/><ellipse cx="407.75" cy="117.5" rx="1.75" ry="6.5" fill="#b08868" opacity="0.9"/><ellipse cx="413.0" cy="119.0" rx="2.5" ry="5.0" fill="#6a4c3c" opacity="0.9"/><ellipse cx="418.75" cy="117.5" rx="2.75" ry="4.0" fill="#4e4038" opacity="0.9"/><ellipse cx="416.5" cy="124.5" rx="2.5" ry="3.5" fill="#a88464" opacity="0.9"/><ellipse cx="434.0" cy="115.5" rx="3.0" ry="2.0" fill="#7b91b4" opacity="0.9"/><ellipse cx="438.75" cy="117.0" rx="1.75" ry="5.0" fill="#9c7a50" opacity="0.9"/><ellipse cx="444.5" cy="118.5" rx="2.5" ry="6.5" fill="#d9cdbc" opacity="0.9"/><ellipse cx="447.5" cy="112.0" rx="1.5" ry="8.0" fill="#7a4e38" opacity="0.9"/><ellipse cx="422.5" cy="121.5" rx="1.5" ry="2.5" fill="#d0b090" opacity="0.9"/><rect x="426" y="122.5" width="14" height="5" fill="#b8a898"/><rect x="427" y="123.6" width="12" height="0.5" fill="#6a5a50"/><rect x="427" y="125.2" width="12" height="0.5" fill="#6a5a50"/><rect x="400" y="128.6" width="49" height="4" fill="#a69282" opacity="0.7"/></g></g></g><text x="375.6" y="68.3" text-anchor="middle" font-family='"Liberation Serif",serif' font-style="italic" font-size="2.3" fill="#d0503a">Chapter 1</text><g font-family='"Liberation Serif",serif' font-size="6" fill="#6f6f6f" text-anchor="middle"><text x="375.8" y="78" textLength="29.3" lengthAdjust="spacingAndGlyphs">THE HIGH</text><text x="376" y="84" textLength="40" lengthAdjust="spacingAndGlyphs">RENAISSANCE</text></g><g font-family='"Liberation Serif",serif' font-size="2.3" fill="#555" font-weight="normal" opacity="1"><text x="354.30" y="91.20" textLength="43.00" lengthAdjust="spacingAndGlyphs">aperiam, eaque ipsa quae ab illo</text><text x="354.30" y="94.01" textLength="43.00" lengthAdjust="spacingAndGlyphs">inventore veritatis et quasi architecto</text><text x="354.30" y="96.83" textLength="43.00" lengthAdjust="spacingAndGlyphs">beatae vitae dicta sunt explicabo. Nemo</text><text x="354.30" y="99.64" textLength="43.00" lengthAdjust="spacingAndGlyphs">enim ipsam voluptatem quia voluptas sit</text><text x="354.30" y="102.46" textLength="43.00" lengthAdjust="spacingAndGlyphs">aspernatur aut odit aut fugit, sed quia</text><text x="354.30" y="105.27" textLength="43.00" lengthAdjust="spacingAndGlyphs">consequuntur magni dolores eos qui</text><text x="354.30" y="108.09" textLength="43.00" lengthAdjust="spacingAndGlyphs">ratione voluptatem sequi nesciunt.</text><text x="354.30" y="110.90" textLength="15.48" lengthAdjust="spacingAndGlyphs">Lorem ipsum</text></g></svg></div>
<div class="lbl" style="left:360.0px;top:136.9px;width:80px">Classic</div>
<div class="th" style="left:463px;top:61px;width:98px;height:72px"><svg width="98" height="72" viewBox="463 61 98 72"><defs><clipPath id="c5"><rect x="467.2" y="79.5" width="89.6" height="34.4"/></clipPath><linearGradient id="g5" x1="0" y1="0" x2="1" y2="0"><stop offset="0" stop-color="#3a2746"/><stop offset="0.3" stop-color="#38284e"/><stop offset="0.55" stop-color="#242b5c"/><stop offset="1" stop-color="#1c2858"/></linearGradient><radialGradient id="g5g" gradientUnits="userSpaceOnUse" cx="495" cy="97" r="34" gradientTransform="translate(495 97) scale(1.2 0.88) translate(-495 -97)"><stop offset="0" stop-color="#ff7a28"/><stop offset="0.2" stop-color="#ee4a1c"/><stop offset="0.45" stop-color="#c83420" stop-opacity="0.85"/><stop offset="0.75" stop-color="#8a2830" stop-opacity="0.45"/><stop offset="1" stop-color="#5a2840" stop-opacity="0"/></radialGradient><radialGradient id="g5h" gradientUnits="userSpaceOnUse" cx="492" cy="111" r="10"><stop offset="0" stop-color="#fff2a0"/><stop offset="0.3" stop-color="#ffb030"/><stop offset="0.7" stop-color="#ff6a18" stop-opacity="0.8"/><stop offset="1" stop-color="#e84010" stop-opacity="0"/></radialGradient><filter id="b5"><feGaussianBlur stdDeviation="0.45"/></filter><filter id="b5b"><feGaussianBlur stdDeviation="1.4"/></filter></defs><rect x="463.5" y="61.5" width="97.5" height="71" fill="#fdfdfd"/><rect x="466.8" y="64.2" width="90.7" height="64.8" fill="none" stroke="#d4d4d4" stroke-width="0.4"/><rect x="466.8" y="63.8" width="90.7" height="1" fill="#7a7a7a"/><text x="469.5" y="68.9" font-family='"Liberation Sans",sans-serif' font-size="1.9" fill="#e0452a">CHAPTER 1</text><text x="469.3" y="76" font-family='"Liberation Sans",sans-serif' font-size="7.2" font-weight="bold" fill="#141414" textLength="71.2" lengthAdjust="spacingAndGlyphs">What is Earth Science?</text><rect x="467.2" y="79.5" width="89.6" height="34.4" fill="url(#g5)"/><g clip-path="url(#c5)"><ellipse cx="495" cy="97" rx="42" ry="31" fill="url(#g5g)"/><ellipse cx="490" cy="86" rx="15" ry="8" fill="#d84428" opacity="0.6" filter="url(#b5b)"/><g filter="url(#b5)"><path d="M496 97 Q503.0 81.7 510 80" fill="none" stroke="#e04828" stroke-width="0.4" opacity="0.7"/><path d="M496 97 Q505.0 84.4 514 83" fill="none" stroke="#d84428" stroke-width="0.35" opacity="0.6"/><path d="M496 97 Q501.0 79.9 506 78" fill="none" stroke="#e85030" stroke-width="0.4" opacity="0.7"/><path d="M496 97 Q507.0 88.0 518 87" fill="none" stroke="#c84030" stroke-width="0.3" opacity="0.5"/><path d="M496 97 Q499.0 80.8 502 79" fill="none" stroke="#f06030" stroke-width="0.4" opacity="0.7"/><path d="M496 97 Q509.0 93.4 522 93" fill="none" stroke="#c04030" stroke-width="0.3" opacity="0.5"/><path d="M489 96 Q493 90 498 95 L501 104 Q497 112 494 114 H487 Q491 104 489 96Z" fill="#f05a20"/><ellipse cx="492" cy="111" rx="7" ry="9" fill="url(#g5h)"/><path d="M466 114.5 V108.5 Q474 103 481 97.5 Q486 93.5 490 94.2 Q492.5 96 492 101 Q491 108 487.5 114.5Z" fill="#130b0d"/><path d="M494 114.5 Q498 107 503 102 Q507 98.8 510 100.2 Q515 103.5 519 106.6 Q522 104.6 525 105 Q531 108 536 111 L541 114.5Z" fill="#160c0e"/><path d="M542 114.5 Q546 110.5 550.5 109 Q554 110.5 557 113 V114.5Z" fill="#1c1214"/><path d="M498.5 111 Q503 98 510 100.5 Q516 104 518.5 114" fill="none" stroke="#ff8a28" stroke-width="0.8" opacity="0.9"/><path d="M497 108 Q504 95.5 512 99.5 Q519 104 522 114" fill="none" stroke="#e85a20" stroke-width="0.5" opacity="0.75"/></g></g><g font-family='"Liberation Sans",sans-serif' font-size="2.2" fill="#444" font-weight="normal" opacity="1"><text x="469.50" y="118.30" textLength="86.00" lengthAdjust="spacingAndGlyphs">dolor sit amet, consectetur adipiscing elit, sed do eiusmod tempor incididunt ut</text><text x="469.50" y="120.93" textLength="86.00" lengthAdjust="spacingAndGlyphs">labore et dolore magna aliqua. Ut enim ad minim veniam, quis nostrud exercitation</text><text x="469.50" y="123.57" textLength="86.00" lengthAdjust="spacingAndGlyphs">ullamco laboris nisi ut aliquip ex ea commodo consequat. Duis aute irure dolor in</text><text x="469.50" y="126.20" textLength="30.10" lengthAdjust="spacingAndGlyphs">reprehenderit in voluptate</text></g></svg></div>
<div class="lbl" style="left:472.0px;top:136.9px;width:80px">Editorial</div>
<div class="th" style="left:575px;top:61px;width:98px;height:72px"><svg width="98" height="72" viewBox="575 61 98 72"><defs><clipPath id="c6a"><rect x="581.6" y="76.2" width="25.8" height="30"/></clipPath><clipPath id="c6b"><rect x="608.6" y="76.2" width="59.4" height="30"/></clipPath><clipPath id="c6c"><rect x="627.5" y="109.4" width="40" height="18.2"/></clipPath><filter id="b6"><feGaussianBlur stdDeviation="0.35"/></filter><radialGradient id="g6" cx="0.5" cy="0.5" r="0.75"><stop offset="0" stop-color="#dfe6d0"/><stop offset="0.7" stop-color="#d6dec5"/><stop offset="1" stop-color="#c3ccb0"/></radialGradient><filter id="n6" x="0" y="0" width="1" height="1" color-interpolation-filters="sRGB"><feOffset in="SourceGraphic" result="s"/><feTurbulence type="fractalNoise" baseFrequency="0.25 0.9" numOctaves="3" seed="17" result="t"/><feColorMatrix in="t" type="matrix" values="0.7 0 0 0 0.150  0.7 0 0 0 0.150  0.7 0 0 0 0.150  0 0 0 0 1" result="g"/><feBlend in="g" in2="s" mode="overlay" result="b"/><feComposite in="b" in2="s" operator="in"/></filter></defs><rect x="575.5" y="61.5" width="97.5" height="70.5" fill="url(#g6)"/><text x="624.3" y="66.8" text-anchor="middle" font-family='"Liberation Serif",serif' font-size="2.1" fill="#6d7a5e">CHAPTER 1</text><text x="624.4" y="72.9" text-anchor="middle" font-family='"Liberation Serif",serif' font-size="5.8" fill="#6f7d60" textLength="63" lengthAdjust="spacingAndGlyphs">INSECT CLASSIFICATION</text><rect x="581.6" y="76.2" width="25.8" height="30" fill="#fbfbf6"/><g clip-path="url(#c6a)" filter="url(#b6)"><g stroke="#86ab56" stroke-width="0.6" fill="none" opacity="0.85"><path d="M594 94 Q598 86 606 79"/><path d="M594 94 Q596 85 600 78"/><path d="M594 94 Q593.5 86 595 79"/><path d="M594 94 Q601 89 607 87"/><path d="M596 90 l3 -5 M598.5 88 l4 -4 M600 91 l5 -3"/></g><path d="M582 106.5 V98 Q590 101 598 103 L607.5 104.5 V106.5Z" fill="#7ea24a" opacity="0.85"/><path d="M583.2 81.5 Q586 80.5 589 83.5 Q595 89 600 95 Q604.5 100 606.2 103.8 Q602 104.5 597 103 Q590 101.5 585.5 100.2 Q584.5 96 584.6 92 Q583.4 86 583.2 81.5Z" fill="#161c12"/><path d="M585 84.5 Q588.5 86 591.5 89.5 Q590 91.5 587 90 Q585.5 88 585 84.5Z M592.5 91 Q596 94 599 98 Q596.5 99.5 593.5 97 Q592 94.5 592.5 91Z M586.6 92.5 Q589.5 93.5 591.5 96 Q590.5 98.5 587.6 97.5Z M596 99.8 Q599 100 602.5 102.2 Q599.5 103 596.6 102Z" fill="#a9d47e"/></g><rect x="608.6" y="76.2" width="59.4" height="30" fill="#fbfbf7"/><g clip-path="url(#c6b)" filter="url(#b6)"><g stroke="#5f9a3a" stroke-width="0.9" fill="none"><path d="M622 107 Q620 92 616.5 76"/><path d="M625.5 107 Q623 94 624.2 80"/><path d="M633.8 107 Q634.5 92 635.5 76"/><path d="M639.2 107 Q640.5 92 638 80"/><path d="M643 107 Q641.5 96 645.5 86"/><path d="M656.6 107 Q659.5 90 661.5 76"/></g><g stroke="#8fbc64" stroke-width="0.6" fill="none" opacity="0.85"><path d="M629 107 Q630 95 628 85"/><path d="M650 107 Q652 97 656 89"/><path d="M662 107 Q665 99 668 95"/><path d="M612 80 Q616 79 619 76.5"/></g><path d="M618.8 81 L634.4 84.8" stroke="#1c7a8a" stroke-width="1.1" fill="none"/><ellipse cx="626.6" cy="77.6" rx="2" ry="1.3" fill="#2856c0"/><ellipse cx="620" cy="82.8" rx="1.5" ry="1.2" fill="#2a58c0"/><ellipse cx="619.6" cy="87.6" rx="1.7" ry="1.5" fill="#2450b8"/><path d="M612.5 88 L619 85" stroke="#4a72d0" stroke-width="0.7"/><g fill="#d6d6ce" opacity="0.88"><path d="M640.4 78 Q648 76 654.8 85 Q651 89 645.5 85.5Z"/><path d="M647 89.5 Q654 89 658 98 Q660.5 104 657.5 105.6 Q650 101 647 93Z"/><path d="M615.2 104.4 Q618 97.5 623.6 97.2 Q623.6 102 620 105.5Z"/><path d="M637 80 Q641 79 644 83 L640 85Z"/><path d="M655 86 Q661 84 666 88 Q662 91 657 90Z" opacity="0.6"/></g><path d="M643.4 91 L664.4 79.8" stroke="#55551e" stroke-width="1.6" fill="none"/><ellipse cx="643.6" cy="91.2" rx="1.8" ry="1.4" fill="#45451a"/></g><rect x="581.6" y="107.2" width="86.4" height="0.35" fill="#8a957c" opacity="0.7"/><rect x="581.6" y="109" width="42" height="18.8" fill="#fdfdfa"/><g font-family='"Liberation Serif",serif' font-size="2.2" fill="#4a4a44" font-weight="normal" opacity="1"><text x="583.30" y="111.80" textLength="38.60" lengthAdjust="spacingAndGlyphs">velit esse cillum dolore eu fugiat</text><text x="583.30" y="114.20" textLength="38.60" lengthAdjust="spacingAndGlyphs">nulla pariatur. Excepteur sint</text><text x="583.30" y="116.60" textLength="38.60" lengthAdjust="spacingAndGlyphs">occaecat cupidatat non proident, sunt</text><text x="583.30" y="119.00" textLength="38.60" lengthAdjust="spacingAndGlyphs">in culpa qui officia deserunt mollit</text><text x="583.30" y="121.40" textLength="38.60" lengthAdjust="spacingAndGlyphs">anim id est laborum. Sed ut</text><text x="583.30" y="123.80" textLength="38.60" lengthAdjust="spacingAndGlyphs">perspiciatis unde omnis iste natus</text><text x="583.30" y="126.20" textLength="34.74" lengthAdjust="spacingAndGlyphs">error sit voluptatem accusantium</text></g><g clip-path="url(#c6c)"><g filter="url(#n6)"><rect x="627.5" y="109.4" width="40" height="18.2" fill="#b98d46"/><g filter="url(#b6)"><path d="M641.4 125.4 q4.4 -1.0 8.7 -0.6" stroke="#d8b468" stroke-width="0.90" fill="none" opacity="0.85"/><path d="M627.5 124.5 q2.0 -1.2 4.1 -0.1" stroke="#ecd090" stroke-width="0.72" fill="none" opacity="0.85"/><path d="M649.7 126.7 q3.6 1.1 7.1 0.2" stroke="#7a5420" stroke-width="0.94" fill="none" opacity="0.85"/><path d="M645.3 125.2 q4.4 0.7 8.7 -0.2" stroke="#d0a858" stroke-width="0.74" fill="none" opacity="0.85"/><path d="M631.1 120.9 q1.7 1.2 3.4 -0.1" stroke="#e4c47c" stroke-width="0.57" fill="none" opacity="0.85"/><path d="M651.0 111.3 q3.2 -1.0 6.4 -0.2" stroke="#7a5420" stroke-width="0.52" fill="none" opacity="0.85"/><path d="M662.0 120.6 q1.9 1.1 3.9 0.2" stroke="#ecd090" stroke-width="0.78" fill="none" opacity="0.85"/><path d="M631.6 118.3 q4.4 -0.0 8.9 -0.7" stroke="#8a6228" stroke-width="0.56" fill="none" opacity="0.85"/><path d="M640.7 114.3 q4.0 0.0 8.0 -0.5" stroke="#d8b468" stroke-width="1.07" fill="none" opacity="0.85"/><path d="M641.5 121.9 q4.2 0.1 8.5 0.8" stroke="#f0d8a0" stroke-width="1.02" fill="none" opacity="0.85"/><path d="M654.8 114.2 q2.6 -0.3 5.2 -0.4" stroke="#d8b468" stroke-width="0.82" fill="none" opacity="0.85"/><path d="M647.1 121.0 q3.3 1.2 6.7 0.6" stroke="#f0d8a0" stroke-width="0.98" fill="none" opacity="0.85"/><path d="M659.7 122.8 q2.2 -0.0 4.4 0.4" stroke="#7a5420" stroke-width="1.09" fill="none" opacity="0.85"/><path d="M658.6 118.0 q2.1 1.1 4.2 -0.1" stroke="#7a5420" stroke-width="1.06" fill="none" opacity="0.85"/><path d="M666.5 126.7 q2.6 -1.0 5.2 -0.0" stroke="#d8b468" stroke-width="0.70" fill="none" opacity="0.85"/><path d="M646.3 127.2 q3.3 -0.0 6.7 0.2" stroke="#e4c47c" stroke-width="0.98" fill="none" opacity="0.85"/><path d="M630.4 121.4 q4.2 0.5 8.5 -0.5" stroke="#f0d8a0" stroke-width="1.03" fill="none" opacity="0.85"/><path d="M644.4 120.9 q1.8 -0.2 3.5 -0.2" stroke="#d0a858" stroke-width="1.07" fill="none" opacity="0.85"/><path d="M656.0 112.6 q1.9 0.2 3.8 -0.1" stroke="#d8b468" stroke-width="0.89" fill="none" opacity="0.85"/><path d="M651.5 120.2 q2.9 -0.8 5.8 0.1" stroke="#ecd090" stroke-width="0.51" fill="none" opacity="0.85"/><path d="M659.0 122.6 q1.8 1.0 3.6 -0.1" stroke="#d0a858" stroke-width="1.02" fill="none" opacity="0.85"/><path d="M660.0 113.3 q2.3 0.0 4.5 0.4" stroke="#ecd090" stroke-width="0.70" fill="none" opacity="0.85"/><path d="M648.8 124.5 q1.7 -0.4 3.4 -0.1" stroke="#d0a858" stroke-width="0.85" fill="none" opacity="0.85"/><path d="M663.2 117.1 q4.3 -0.9 8.5 -0.6" stroke="#7a5420" stroke-width="0.81" fill="none" opacity="0.85"/><path d="M661.9 123.5 q3.3 0.7 6.7 -0.5" stroke="#f0d8a0" stroke-width="0.78" fill="none" opacity="0.85"/><path d="M656.0 119.5 q2.5 0.1 5.0 -0.0" stroke="#7a5420" stroke-width="0.97" fill="none" opacity="0.85"/><path d="M662.3 110.5 q2.1 0.7 4.1 0.0" stroke="#e4c47c" stroke-width="0.84" fill="none" opacity="0.85"/><path d="M657.4 125.9 q2.8 1.1 5.7 0.2" stroke="#7a5420" stroke-width="0.62" fill="none" opacity="0.85"/><path d="M638.1 118.6 q3.9 1.1 7.8 0.3" stroke="#7a5420" stroke-width="1.03" fill="none" opacity="0.85"/><path d="M664.7 114.2 q3.2 0.8 6.4 -0.6" stroke="#d8b468" stroke-width="0.57" fill="none" opacity="0.85"/><path d="M644.7 110.8 q2.2 -0.7 4.4 -0.3" stroke="#e4c47c" stroke-width="0.57" fill="none" opacity="0.85"/><path d="M658.1 126.4 q3.4 -0.9 6.9 0.6" stroke="#ecd090" stroke-width="1.08" fill="none" opacity="0.85"/><path d="M635.8 126.6 q2.7 -0.8 5.4 0.3" stroke="#8a6228" stroke-width="0.63" fill="none" opacity="0.85"/><path d="M655.3 127.4 q2.7 -0.7 5.4 -0.3" stroke="#8a6228" stroke-width="0.93" fill="none" opacity="0.85"/><path d="M627.8 119.5 q2.8 -0.3 5.6 0.0" stroke="#e4c47c" stroke-width="0.68" fill="none" opacity="0.85"/><path d="M665.4 111.5 q4.3 1.1 8.5 -0.6" stroke="#d8b468" stroke-width="0.66" fill="none" opacity="0.85"/><path d="M637 122.8 q3 -1 6 0.2 q2 0.6 4 0" stroke="#1a1408" stroke-width="1.1" fill="none"/></g></g></g></svg></div>
<div class="lbl" style="left:584.0px;top:136.9px;width:80px">Craft</div>
<div class="th" style="left:687px;top:61px;width:98px;height:72px"><svg width="98" height="72" viewBox="687 61 98 72"><defs><clipPath id="c7"><rect x="688" y="61.5" width="96.5" height="70.5"/></clipPath><linearGradient id="g7s" x1="0" y1="0" x2="0" y2="1"><stop offset="0" stop-color="#2d59ab"/><stop offset="0.45" stop-color="#4677c2"/><stop offset="0.8" stop-color="#7f9fcc"/><stop offset="1" stop-color="#b9c3cc"/></linearGradient><linearGradient id="g7w" x1="0" y1="0" x2="0.25" y2="1"><stop offset="0" stop-color="#b4c0cf"/><stop offset="0.3" stop-color="#97a8c0"/><stop offset="0.65" stop-color="#6f86a8"/><stop offset="1" stop-color="#43587c"/></linearGradient><radialGradient id="g7sun" gradientUnits="userSpaceOnUse" cx="703.6" cy="86.8" r="17" gradientTransform="translate(703.6 86.8) scale(1.5 0.8) translate(-703.6 -86.8)"><stop offset="0" stop-color="#fffce4"/><stop offset="0.15" stop-color="#ffe47a"/><stop offset="0.45" stop-color="#f2b648" stop-opacity="0.75"/><stop offset="1" stop-color="#e0a040" stop-opacity="0"/></radialGradient><linearGradient id="g7r" x1="0" y1="0" x2="0" y2="1"><stop offset="0" stop-color="#fbe79a" stop-opacity="0.95"/><stop offset="0.4" stop-color="#e6cf94" stop-opacity="0.6"/><stop offset="1" stop-color="#c0b090" stop-opacity="0"/></linearGradient><filter id="b7"><feGaussianBlur stdDeviation="0.5"/></filter><filter id="b7b"><feGaussianBlur stdDeviation="1.1"/></filter><filter id="n7s" x="0" y="0" width="1" height="1" color-interpolation-filters="sRGB"><feOffset in="SourceGraphic" result="s"/><feTurbulence type="fractalNoise" baseFrequency="0.06 0.3" numOctaves="3" seed="4" result="t"/><feColorMatrix in="t" type="matrix" values="0.9 0 0 0 0.050  0.9 0 0 0 0.050  0.9 0 0 0 0.050  0 0 0 0 1" result="g"/><feBlend in="g" in2="s" mode="overlay" result="b"/><feComposite in="b" in2="s" operator="in"/></filter><filter id="n7w" x="0" y="0" width="1" height="1" color-interpolation-filters="sRGB"><feOffset in="SourceGraphic" result="s"/><feTurbulence type="fractalNoise" baseFrequency="0.12 0.7" numOctaves="3" seed="9" result="t"/><feColorMatrix in="t" type="matrix" values="0.7 0 0 0 0.150  0.7 0 0 0 0.150  0.7 0 0 0 0.150  0 0 0 0 1" result="g"/><feBlend in="g" in2="s" mode="overlay" result="b"/><feComposite in="b" in2="s" operator="in"/></filter><filter id="n7g" x="0" y="0" width="1" height="1" color-interpolation-filters="sRGB"><feOffset in="SourceGraphic" result="s"/><feTurbulence type="fractalNoise" baseFrequency="0.6" numOctaves="3" seed="2" result="t"/><feColorMatrix in="t" type="matrix" values="0.8 0 0 0 0.100  0.8 0 0 0 0.100  0.8 0 0 0 0.100  0 0 0 0 1" result="g"/><feBlend in="g" in2="s" mode="overlay" result="b"/><feComposite in="b" in2="s" operator="in"/></filter></defs><rect x="688" y="61.5" width="96.5" height="70.5" fill="#24282a"/><g clip-path="url(#c7)"><g filter="url(#n7s)"><rect x="688" y="61.5" width="96.5" height="29.5" fill="url(#g7s)"/><g filter="url(#b7b)" fill="#f4f6fa"><ellipse cx="755" cy="69" rx="15" ry="2.6" opacity="0.9" transform="rotate(14 755 69)"/><ellipse cx="742" cy="64" rx="10" ry="1.4" opacity="0.7" transform="rotate(10 742 64)"/><ellipse cx="700" cy="71" rx="12" ry="2" opacity="0.75" transform="rotate(-8 700 71)"/><ellipse cx="726" cy="79.5" rx="20" ry="1.8" opacity="0.7" transform="rotate(-6 726 79.5)"/><ellipse cx="770" cy="79" rx="14" ry="1.6" opacity="0.7"/><ellipse cx="748" cy="84.5" rx="12" ry="1.3" opacity="0.8"/><ellipse cx="697" cy="79.5" rx="8" ry="1.4" opacity="0.65"/></g><g filter="url(#b7b)" fill="#223a70" opacity="0.6"><ellipse cx="720" cy="66.5" rx="16" ry="2.2"/><ellipse cx="704" cy="76" rx="12" ry="1.5"/><ellipse cx="762" cy="75" rx="16" ry="1.5"/><ellipse cx="775" cy="65" rx="10" ry="2"/></g><g filter="url(#b7b)" fill="#48566f" opacity="0.8"><ellipse cx="694" cy="85.5" rx="7" ry="1.3"/><ellipse cx="720" cy="85" rx="9" ry="1.2"/><ellipse cx="692" cy="88.6" rx="5" ry="0.9"/></g></g><g filter="url(#n7w)"><rect x="688" y="90.4" width="96.5" height="42" fill="url(#g7w)"/><path d="M696 91 H712 L719 126 H689Z" fill="url(#g7r)" filter="url(#b7b)"/></g><ellipse cx="703.6" cy="86.8" rx="25" ry="13.5" fill="url(#g7sun)"/><g filter="url(#b7)"><path d="M688 90.2 Q692 88.8 698 90.8 H688Z" fill="#3a4048"/><path d="M701 95.5 Q703 91 709 90.5 Q716 89.5 720 87 Q726 85 732 86.5 Q738 88 746 88.5 Q756 89 764 86.5 Q775 84 785 81.5 V97 H742 Q730 96.5 722 96.8 Q710 97.5 701 95.5Z" fill="#22321a"/><path d="M744 89.6 Q758 89 768 86.5 Q778 84.5 785 82.5 V92 H744Z" fill="#5f9026" opacity="0.85"/><path d="M722 90.4 Q730 88.6 738 90 L740 92 H722Z" fill="#47702a" opacity="0.7"/></g><g filter="url(#n7g)"><g filter="url(#b7)"><path d="M712 132.5 Q719 124 729 117 Q739 111 750 110.5 L785 109.5 V132.5Z" fill="#76a422"/><path d="M722 132.5 Q730 124 742 120 Q760 116 785 118 V132.5Z" fill="#a2c62c" opacity="0.85"/><path d="M712 132.5 Q719 124 729 117 L733 119 Q724 126 719 132.5Z" fill="#34481a" opacity="0.8"/></g></g></g><rect x="742" y="91.2" width="42.5" height="34.8" fill="#fefefe"/><g font-family='"Liberation Sans",sans-serif' font-size="3.9" fill="#444"><text x="745.5" y="102.4" textLength="13" lengthAdjust="spacingAndGlyphs">ISLAND</text><text x="745.5" y="106" textLength="20.5" lengthAdjust="spacingAndGlyphs">ADVENTURE</text></g><g font-family='"Liberation Sans",sans-serif' font-size="2.0" fill="#666" font-weight="normal" opacity="1"><text x="745.50" y="108.60" textLength="35.50" lengthAdjust="spacingAndGlyphs">doloremque laudantium, totam rem</text><text x="745.50" y="110.60" textLength="35.50" lengthAdjust="spacingAndGlyphs">aperiam, eaque ipsa quae ab illo</text><text x="745.50" y="112.60" textLength="35.50" lengthAdjust="spacingAndGlyphs">inventore veritatis et quasi</text><text x="745.50" y="114.60" textLength="35.50" lengthAdjust="spacingAndGlyphs">architecto beatae vitae dicta sunt</text><text x="745.50" y="116.60" textLength="35.50" lengthAdjust="spacingAndGlyphs">explicabo. Nemo enim ipsam</text><text x="745.50" y="118.60" textLength="35.50" lengthAdjust="spacingAndGlyphs">voluptatem quia voluptas sit</text><text x="745.50" y="120.60" textLength="35.50" lengthAdjust="spacingAndGlyphs">aspernatur aut odit aut fugit, sed</text><text x="745.50" y="122.60" textLength="31.95" lengthAdjust="spacingAndGlyphs">quia consequuntur magni dolores</text></g></svg></div>
<div class="lbl" style="left:696.0px;top:136.9px;width:80px">Photo Book</div>
<div class="th" style="left:15px;top:165px;width:98px;height:72px"><svg width="98" height="72" viewBox="15 165 98 72"><defs><clipPath id="c8"><rect x="15.5" y="165.5" width="96.5" height="70.5"/></clipPath><linearGradient id="g8s" x1="0" y1="0" x2="0" y2="1"><stop offset="0" stop-color="#c4d7e2"/><stop offset="0.25" stop-color="#e1ebf0"/><stop offset="0.6" stop-color="#b4ccd8"/><stop offset="1" stop-color="#7fa5b8"/></linearGradient><linearGradient id="g8c" x1="0" y1="0" x2="0.3" y2="1"><stop offset="0" stop-color="#5b8aa4"/><stop offset="0.5" stop-color="#356580"/><stop offset="1" stop-color="#4a7a94"/></linearGradient><filter id="b8"><feGaussianBlur stdDeviation="0.5"/></filter><filter id="n8" x="0" y="0" width="1" height="1" color-interpolation-filters="sRGB"><feOffset in="SourceGraphic" result="s"/><feTurbulence type="fractalNoise" baseFrequency="0.5 0.8" numOctaves="3" seed="3" result="t"/><feColorMatrix in="t" type="matrix" values="0.75 0 0 0 0.125  0.75 0 0 0 0.125  0.75 0 0 0 0.125  0 0 0 0 1" result="g"/><feBlend in="g" in2="s" mode="overlay" result="b"/><feComposite in="b" in2="s" operator="in"/></filter></defs><g clip-path="url(#c8)"><g filter="url(#n8)"><rect x="15.5" y="165.5" width="96.5" height="71" fill="url(#g8s)"/><g filter="url(#b8)"><path d="M15 188 Q22 185 30 188 Q40 184 48 187 Q54 186 58 184 Q63 180 67.5 181.5 Q72 184 78 190 V210 H15Z" fill="#8db1c4"/><path d="M52 200 Q58 194 64 190 Q70 186 76 190 L80 204 V212 H52Z" fill="#6a97ae"/><path d="M58 211 Q64 200 69 193 Q74 185 78 180 Q80.5 177.5 83 179 Q88 178 93 176 Q99 173 104 173.5 Q108 172 113 172 V214 H58Z" fill="url(#g8c)"/><path d="M74 204 Q80 192 86 184 Q90 190 88 198 Q93 190 99 182 Q101 192 97 203 Q103 196 109 188 V212 H70Z" fill="#28546e" opacity="0.6"/><rect x="15" y="211" width="98" height="26" fill="#79a5b8"/><path d="M15 236.5 V226 Q40 229 60 226 Q90 231 113 226 V236.5Z" fill="#5a8ba2" opacity="0.8"/><g fill="none" stroke="#d8e6ec" stroke-width="0.8" opacity="0.85"><path d="M56 214 q6 -2 12 0 q6 2 10 0"/><path d="M62 229 q8 -2 16 0 q8 2 16 0 q6 -1 12 0"/><path d="M88 220 q6 -1.5 12 0 q6 1.5 12 0"/><path d="M58 233.5 q10 -2 20 0 q10 2 20 0"/><path d="M60 221 q5 -1.6 10 0"/></g><g fill="none" stroke="#34647e" stroke-width="0.7" opacity="0.7"><path d="M60 225 q8 -2 16 0 q8 2 16 0"/><path d="M70 231.5 q8 -1.5 16 0 q8 1.5 16 0"/></g><g transform="translate(-1 1) rotate(17 84 218) translate(84 218) scale(1.12) translate(-84 -218)"><path d="M72 217 Q74 223.5 80 224 H92 Q96 223 96 218 Q84 220 72 217Z" fill="#14303e"/><path d="M75 216.5 L78 205 H88 L89 216.5Z" fill="#d4e2ea"/><path d="M80 204 L81.5 196 H89 L89.5 204Z" fill="#bfd2dc"/><path d="M90 217 L91 203 H97 L96.5 217Z" fill="#c9dae3"/><path d="M78 210 H89 M75.5 213 H89" stroke="#27485a" stroke-width="0.6"/><path d="M84 218 V192 M93.5 218 V198 M77 218 V202" stroke="#14303e" stroke-width="0.7"/><path d="M84 193 L98 217 M84 193 L72 215" stroke="#27485a" stroke-width="0.35"/></g><path d="M102.5 216.5 q0.5 -3 2 -3.5 q2.5 -0.5 3.5 1 l-0.3 2.8z" fill="#1f4254"/><path d="M104 213.5 l0.8 -2.6 l1.4 2.4z" fill="#dbe7ee"/><g fill="#27485a"><rect x="58" y="209.5" width="1" height="2.4"/><rect x="61" y="209" width="1" height="2.6"/><rect x="70" y="210" width="1.2" height="2.4"/></g></g></g></g><rect x="20.3" y="170.2" width="36.2" height="61.6" fill="#363f46" opacity="0.88"/><text x="38.4" y="174.9" text-anchor="middle" font-family='"Liberation Serif",serif' font-size="2.6" fill="#c3cdd3" textLength="17" lengthAdjust="spacingAndGlyphs">CHAPTER 1</text><rect x="34" y="177" width="9" height="0.3" fill="#8e9aa0"/><g font-family='"Liberation Serif",serif' font-size="3.7" fill="#9fb0b9" text-anchor="middle"><text x="38.2" y="182.6" textLength="20" lengthAdjust="spacingAndGlyphs">SAILING THE</text><text x="38.2" y="186.6" textLength="28" lengthAdjust="spacingAndGlyphs">SOUTH PACIFIC</text></g><g font-family='"Liberation Serif",serif' font-size="2.2" fill="#d9e0e4" font-weight="normal" opacity="1"><text x="23.00" y="195.30" textLength="30.50" lengthAdjust="spacingAndGlyphs">eos qui ratione voluptatem</text><text x="23.00" y="198.32" textLength="30.50" lengthAdjust="spacingAndGlyphs">sequi nesciunt. Lorem ipsum</text><text x="23.00" y="201.34" textLength="30.50" lengthAdjust="spacingAndGlyphs">dolor sit amet, consectetur</text><text x="23.00" y="204.36" textLength="30.50" lengthAdjust="spacingAndGlyphs">adipiscing elit, sed do</text><text x="23.00" y="207.38" textLength="30.50" lengthAdjust="spacingAndGlyphs">eiusmod tempor incididunt ut</text><text x="23.00" y="210.40" textLength="30.50" lengthAdjust="spacingAndGlyphs">labore et dolore magna</text><text x="23.00" y="213.42" textLength="30.50" lengthAdjust="spacingAndGlyphs">aliqua. Ut enim ad minim</text><text x="23.00" y="216.44" textLength="30.50" lengthAdjust="spacingAndGlyphs">veniam, quis nostrud</text><text x="23.00" y="219.46" textLength="30.50" lengthAdjust="spacingAndGlyphs">exercitation ullamco laboris</text><text x="23.00" y="222.48" textLength="30.50" lengthAdjust="spacingAndGlyphs">nisi ut aliquip ex ea commodo</text><text x="23.00" y="225.50" textLength="25.93" lengthAdjust="spacingAndGlyphs">consequat. Duis aute</text></g></svg></div>
<div class="lbl" style="left:24.0px;top:241.0px;width:80px">Antique</div>
<div class="th" style="left:127px;top:165px;width:98px;height:72px"><svg width="98" height="72" viewBox="127 165 98 72"><defs><clipPath id="c9"><rect x="127.5" y="182.8" width="96.5" height="53.2"/></clipPath><filter id="b9"><feGaussianBlur stdDeviation="0.45"/></filter><filter id="b9b"><feGaussianBlur stdDeviation="1.1"/></filter><filter id="n9" x="0" y="0" width="1" height="1" color-interpolation-filters="sRGB"><feOffset in="SourceGraphic" result="s"/><feTurbulence type="fractalNoise" baseFrequency="0.5" numOctaves="3" seed="6" result="t"/><feColorMatrix in="t" type="matrix" values="0.55 0 0 0 0.225  0.55 0 0 0 0.225  0.55 0 0 0 0.225  0 0 0 0 1" result="g"/><feBlend in="g" in2="s" mode="overlay" result="b"/><feComposite in="b" in2="s" operator="in"/></filter></defs><rect x="127.5" y="165" width="96.5" height="71" fill="#4b8a27"/><text x="132" y="171.2" font-family='"Liberation Sans",sans-serif' font-size="1.7" fill="#e6f0d8">Chapter 1</text><text x="131.8" y="178" font-family='"Liberation Serif",serif' font-size="7.2" fill="#fdfdf6" textLength="46.3" lengthAdjust="spacingAndGlyphs">Seasonal Dishes</text><g clip-path="url(#c9)"><g filter="url(#n9)"><rect x="127.5" y="182.8" width="96.5" height="53.2" fill="#c9a248"/><g filter="url(#b9b)"><rect x="127" y="182" width="18" height="24" fill="#ece6da"/><rect x="127" y="203" width="42" height="34" fill="#35561a"/><path d="M166 226 Q190 236 225 229 V237 H166Z" fill="#4a2410"/><ellipse cx="190" cy="210" rx="26" ry="20" fill="#dcb858"/><ellipse cx="178" cy="186" rx="20" ry="6" fill="#d8b456"/></g><g filter="url(#b9)"><circle cx="170.0" cy="189.2" r="1.08" fill="#c89030"/><circle cx="180.0" cy="208.8" r="0.96" fill="#f4e4a0"/><circle cx="201.8" cy="187.3" r="1.06" fill="#e8c860"/><circle cx="169.9" cy="183.8" r="1.06" fill="#e8c860"/><circle cx="183.6" cy="199.3" r="0.89" fill="#f4e4a0"/><circle cx="217.7" cy="212.8" r="0.94" fill="#e8c860"/><circle cx="167.6" cy="188.3" r="0.82" fill="#f0d888"/><circle cx="196.5" cy="208.5" r="0.83" fill="#f0d888"/><circle cx="187.0" cy="191.5" r="1.06" fill="#d8a838"/><circle cx="223.6" cy="184.8" r="1.03" fill="#e8c860"/><circle cx="190.8" cy="192.1" r="0.81" fill="#c89030"/><circle cx="183.1" cy="214.6" r="0.89" fill="#b87820"/><circle cx="186.6" cy="223.1" r="1.14" fill="#c89030"/><circle cx="172.8" cy="193.3" r="0.85" fill="#f0d888"/><circle cx="211.6" cy="216.9" r="0.76" fill="#b87820"/><circle cx="211.9" cy="183.7" r="1.03" fill="#b87820"/><circle cx="168.9" cy="190.8" r="1.00" fill="#e8c860"/><circle cx="178.2" cy="207.3" r="0.97" fill="#d8a838"/><circle cx="201.3" cy="185.2" r="0.77" fill="#f0d888"/><circle cx="183.0" cy="195.6" r="1.14" fill="#d8a838"/><circle cx="190.5" cy="194.7" r="0.80" fill="#d8a838"/><circle cx="163.5" cy="199.1" r="0.91" fill="#e8c860"/><circle cx="187.2" cy="192.6" r="1.05" fill="#f4e4a0"/><circle cx="179.2" cy="197.4" r="0.80" fill="#b87820"/><circle cx="193.3" cy="208.4" r="0.77" fill="#e0b850"/><circle cx="216.1" cy="220.6" r="0.88" fill="#f4e4a0"/><circle cx="197.6" cy="185.1" r="1.02" fill="#e0b850"/><circle cx="188.0" cy="203.6" r="1.07" fill="#b87820"/><circle cx="187.3" cy="223.1" r="0.71" fill="#e0b850"/><circle cx="200.8" cy="221.3" r="1.01" fill="#b87820"/><circle cx="201.3" cy="194.0" r="0.72" fill="#e8c860"/><circle cx="177.9" cy="204.7" r="0.98" fill="#e8c860"/><circle cx="196.3" cy="215.7" r="0.82" fill="#c89030"/><circle cx="183.8" cy="186.4" r="1.10" fill="#f4e4a0"/><circle cx="205.2" cy="205.7" r="0.73" fill="#e0b850"/><circle cx="169.7" cy="218.0" r="0.80" fill="#f0d888"/><circle cx="198.1" cy="205.1" r="0.87" fill="#e0b850"/><circle cx="185.4" cy="215.8" r="0.72" fill="#e0b850"/><circle cx="196.8" cy="192.5" r="0.77" fill="#f4e4a0"/><circle cx="168.8" cy="218.7" r="0.98" fill="#d8a838"/><circle cx="157.4" cy="193.4" r="0.83" fill="#c89030"/><circle cx="188.2" cy="205.3" r="1.05" fill="#c89030"/><circle cx="223.5" cy="209.4" r="1.14" fill="#d8a838"/><circle cx="219.3" cy="183.8" r="0.73" fill="#c89030"/><circle cx="223.6" cy="201.6" r="0.73" fill="#f0d888"/><circle cx="169.4" cy="200.3" r="1.07" fill="#f4e4a0"/><circle cx="187.6" cy="225.6" r="0.86" fill="#b87820"/><circle cx="186.8" cy="225.1" r="0.71" fill="#c89030"/><circle cx="183.4" cy="197.5" r="0.89" fill="#f0d888"/><circle cx="177.8" cy="188.8" r="0.70" fill="#d8a838"/><circle cx="205.6" cy="223.3" r="1.12" fill="#e8c860"/><circle cx="164.5" cy="183.6" r="0.83" fill="#b87820"/><circle cx="177.5" cy="201.9" r="0.97" fill="#e0b850"/><circle cx="176.7" cy="203.5" r="1.08" fill="#d8a838"/><circle cx="170.8" cy="185.5" r="0.83" fill="#b87820"/><circle cx="219.2" cy="195.0" r="0.90" fill="#d8a838"/><circle cx="173.4" cy="220.1" r="1.13" fill="#e0b850"/><circle cx="215.4" cy="222.0" r="0.88" fill="#b87820"/><circle cx="214.8" cy="209.6" r="1.02" fill="#f0d888"/><circle cx="183.4" cy="219.1" r="1.09" fill="#b87820"/><circle cx="190.7" cy="191.2" r="0.85" fill="#c89030"/><circle cx="172.0" cy="218.5" r="0.82" fill="#b87820"/><circle cx="198.5" cy="197.4" r="1.00" fill="#f4e4a0"/><circle cx="210.1" cy="209.4" r="1.11" fill="#c89030"/><circle cx="223.7" cy="204.6" r="0.95" fill="#f0d888"/><circle cx="168.1" cy="191.4" r="0.74" fill="#f4e4a0"/><circle cx="167.7" cy="195.4" r="0.79" fill="#f4e4a0"/><circle cx="178.3" cy="218.8" r="0.87" fill="#f0d888"/><circle cx="175.0" cy="186.0" r="0.96" fill="#d8a838"/><circle cx="176.7" cy="216.0" r="0.98" fill="#f4e4a0"/><circle cx="213.9" cy="193.4" r="1.10" fill="#d8a838"/><circle cx="178.5" cy="214.0" r="1.13" fill="#c89030"/><circle cx="212.8" cy="224.9" r="0.76" fill="#e8c860"/><circle cx="181.5" cy="219.7" r="0.91" fill="#e0b850"/><circle cx="193.5" cy="183.0" r="1.12" fill="#c89030"/><circle cx="218.7" cy="208.3" r="1.14" fill="#c89030"/><circle cx="168.4" cy="188.2" r="0.77" fill="#f0d888"/><circle cx="221.9" cy="188.2" r="1.02" fill="#e0b850"/><circle cx="197.9" cy="219.7" r="0.74" fill="#c89030"/><circle cx="207.5" cy="183.1" r="0.80" fill="#f0d888"/><circle cx="218.1" cy="214.0" r="1.13" fill="#d8a838"/><circle cx="196.4" cy="208.4" r="1.01" fill="#c89030"/><circle cx="158.3" cy="186.4" r="1.12" fill="#f4e4a0"/><circle cx="164.2" cy="195.5" r="0.97" fill="#e0b850"/><circle cx="150.8" cy="197.5" r="0.83" fill="#c89030"/><circle cx="173.4" cy="223.3" r="0.91" fill="#f0d888"/><circle cx="167.4" cy="194.9" r="1.02" fill="#c89030"/><circle cx="172.7" cy="184.0" r="1.10" fill="#c89030"/><circle cx="197.9" cy="186.9" r="1.00" fill="#f0d888"/><circle cx="218.5" cy="193.9" r="1.01" fill="#e8c860"/><circle cx="203.2" cy="200.4" r="0.79" fill="#c89030"/><circle cx="209.0" cy="218.5" r="0.73" fill="#f4e4a0"/><circle cx="186.7" cy="192.6" r="1.07" fill="#e0b850"/><circle cx="167.1" cy="193.6" r="1.10" fill="#e0b850"/><circle cx="195.1" cy="226.0" r="0.89" fill="#c89030"/><circle cx="160.8" cy="201.9" r="0.71" fill="#f0d888"/><circle cx="194.1" cy="202.9" r="0.73" fill="#b87820"/><circle cx="215.4" cy="218.2" r="1.12" fill="#e8c860"/><circle cx="174.4" cy="191.9" r="1.04" fill="#f4e4a0"/><circle cx="178.0" cy="200.9" r="0.90" fill="#d8a838"/><circle cx="158.1" cy="186.8" r="0.86" fill="#e8c860"/><circle cx="220.7" cy="188.9" r="0.79" fill="#e0b850"/><circle cx="176.4" cy="222.4" r="1.06" fill="#e0b850"/><circle cx="183.0" cy="198.5" r="1.10" fill="#b87820"/><circle cx="152.2" cy="202.7" r="0.98" fill="#e0b850"/><circle cx="180.0" cy="201.0" r="0.73" fill="#c89030"/><circle cx="218.1" cy="195.3" r="0.73" fill="#b87820"/><circle cx="194.8" cy="200.4" r="1.13" fill="#d8a838"/><circle cx="195.7" cy="195.6" r="1.01" fill="#b87820"/><circle cx="218.4" cy="197.3" r="1.04" fill="#b87820"/><circle cx="217.8" cy="213.4" r="0.71" fill="#e8c860"/><circle cx="167.3" cy="205.8" r="1.13" fill="#c89030"/><circle cx="178.6" cy="195.1" r="1.07" fill="#c89030"/><circle cx="172.4" cy="216.2" r="0.97" fill="#f0d888"/><circle cx="174.3" cy="198.3" r="1.05" fill="#d8a838"/><circle cx="194.1" cy="207.6" r="1.04" fill="#c89030"/><circle cx="168.3" cy="186.1" r="0.92" fill="#e8c860"/><circle cx="190.3" cy="190.7" r="1.10" fill="#c89030"/><circle cx="223.1" cy="195.7" r="0.79" fill="#e8c860"/><circle cx="221.9" cy="191.3" r="0.89" fill="#f0d888"/><circle cx="195.9" cy="215.4" r="0.94" fill="#b87820"/><circle cx="207.3" cy="219.5" r="1.08" fill="#e0b850"/><circle cx="171.7" cy="210.2" r="0.81" fill="#d8a838"/><circle cx="169.3" cy="204.1" r="0.81" fill="#f0d888"/><circle cx="192.8" cy="198.7" r="0.81" fill="#c89030"/><circle cx="168.2" cy="208.3" r="1.06" fill="#b87820"/><circle cx="210.6" cy="223.3" r="0.72" fill="#d8a838"/><circle cx="171.7" cy="188.7" r="0.97" fill="#f0d888"/><circle cx="211.3" cy="192.3" r="0.87" fill="#e8c860"/><circle cx="214.1" cy="204.6" r="1.05" fill="#d8a838"/><circle cx="199.2" cy="183.3" r="0.97" fill="#b87820"/><circle cx="195.9" cy="193.4" r="0.85" fill="#d8a838"/><circle cx="217.6" cy="222.1" r="0.85" fill="#e0b850"/><circle cx="200.2" cy="191.9" r="0.74" fill="#d8a838"/><circle cx="185.8" cy="202.6" r="0.88" fill="#e0b850"/><circle cx="190.7" cy="213.7" r="0.99" fill="#e8c860"/><circle cx="179.4" cy="196.0" r="1.00" fill="#d8a838"/><circle cx="180.9" cy="185.5" r="0.95" fill="#b87820"/><circle cx="176.4" cy="203.0" r="1.04" fill="#e0b850"/><circle cx="209.4" cy="213.9" r="1.03" fill="#c89030"/><circle cx="165.1" cy="183.3" r="0.89" fill="#f0d888"/><circle cx="210.7" cy="202.5" r="0.91" fill="#d8a838"/><circle cx="162.0" cy="183.7" r="0.76" fill="#f4e4a0"/><circle cx="209.7" cy="202.0" r="0.98" fill="#f4e4a0"/><circle cx="177.4" cy="207.2" r="0.86" fill="#f0d888"/><circle cx="162.0" cy="191.2" r="0.75" fill="#e8c860"/><circle cx="186.3" cy="221.6" r="0.79" fill="#e0b850"/><circle cx="222.2" cy="206.2" r="0.97" fill="#e8c860"/><circle cx="197.1" cy="187.1" r="0.98" fill="#b87820"/><circle cx="211.0" cy="190.7" r="1.09" fill="#e0b850"/><circle cx="196.0" cy="212.5" r="1.07" fill="#f0d888"/><circle cx="163.5" cy="193.5" r="1.12" fill="#c89030"/><circle cx="161.6" cy="200.2" r="0.81" fill="#f0d888"/><circle cx="203.6" cy="226.1" r="1.10" fill="#e8c860"/><circle cx="212.3" cy="215.3" r="1.08" fill="#b87820"/><circle cx="190.7" cy="213.1" r="0.99" fill="#d8a838"/><circle cx="172.8" cy="195.0" r="1.00" fill="#c89030"/><circle cx="183.1" cy="204.0" r="0.70" fill="#e8c860"/><circle cx="223.0" cy="205.3" r="1.04" fill="#c89030"/><circle cx="207.7" cy="205.0" r="1.06" fill="#f0d888"/><circle cx="179.6" cy="186.2" r="0.89" fill="#d8a838"/><circle cx="187.8" cy="185.0" r="0.76" fill="#b87820"/><circle cx="218.2" cy="198.1" r="0.93" fill="#b87820"/><circle cx="223.7" cy="218.1" r="0.75" fill="#e0b850"/><circle cx="171.3" cy="221.9" r="0.77" fill="#e0b850"/><circle cx="208.3" cy="227.7" r="1.07" fill="#e8c860"/><circle cx="195.2" cy="195.1" r="1.10" fill="#d8a838"/><circle cx="170.3" cy="222.2" r="0.81" fill="#f0d888"/><circle cx="221.4" cy="206.0" r="0.82" fill="#f4e4a0"/><circle cx="187.4" cy="198.3" r="0.79" fill="#e8c860"/><circle cx="179.9" cy="213.6" r="1.01" fill="#d8a838"/><circle cx="216.3" cy="191.1" r="0.82" fill="#e0b850"/><circle cx="206.9" cy="185.3" r="0.86" fill="#e0b850"/><circle cx="214.6" cy="209.6" r="1.01" fill="#f4e4a0"/><circle cx="216.3" cy="195.1" r="0.98" fill="#f4e4a0"/><circle cx="179.2" cy="221.3" r="0.87" fill="#d8a838"/><circle cx="177.3" cy="190.0" r="1.04" fill="#d8a838"/><circle cx="182.7" cy="191.5" r="1.13" fill="#b87820"/><circle cx="171.9" cy="207.8" r="0.99" fill="#d8a838"/><circle cx="222.8" cy="211.1" r="1.10" fill="#b87820"/><circle cx="204.2" cy="218.9" r="0.77" fill="#f0d888"/><circle cx="195.6" cy="203.7" r="0.86" fill="#f4e4a0"/><circle cx="195.3" cy="185.2" r="0.70" fill="#e8c860"/><circle cx="176.3" cy="188.1" r="0.94" fill="#d8a838"/><circle cx="180.6" cy="197.5" r="0.79" fill="#f0d888"/><circle cx="196.2" cy="205.8" r="0.71" fill="#f0d888"/><circle cx="209.3" cy="217.0" r="0.74" fill="#c89030"/><circle cx="197.2" cy="224.8" r="0.82" fill="#e0b850"/><circle cx="216.1" cy="211.5" r="0.90" fill="#f4e4a0"/><circle cx="219.3" cy="218.2" r="0.77" fill="#f0d888"/><circle cx="150.0" cy="186.0" r="0.88" fill="#e8c860"/><circle cx="167.6" cy="185.8" r="0.75" fill="#e0b850"/><circle cx="195.3" cy="214.5" r="0.76" fill="#f0d888"/><circle cx="187.5" cy="213.8" r="0.98" fill="#e0b850"/><circle cx="187.6" cy="186.1" r="0.72" fill="#b87820"/><circle cx="215.8" cy="220.6" r="0.94" fill="#b87820"/><circle cx="177.8" cy="204.0" r="0.74" fill="#c89030"/><circle cx="198.5" cy="191.4" r="0.82" fill="#e8c860"/><circle cx="197.7" cy="188.9" r="1.12" fill="#b87820"/><circle cx="219.8" cy="195.6" r="0.82" fill="#e8c860"/><circle cx="191.0" cy="203.9" r="1.11" fill="#e0b850"/><circle cx="221.9" cy="197.2" r="0.74" fill="#f0d888"/><circle cx="187.5" cy="191.1" r="1.08" fill="#f0d888"/><circle cx="165.0" cy="190.6" r="0.79" fill="#d8a838"/><circle cx="178.8" cy="211.9" r="1.11" fill="#c89030"/><circle cx="196.7" cy="216.3" r="1.08" fill="#b87820"/><circle cx="189.7" cy="205.7" r="1.01" fill="#f4e4a0"/><circle cx="213.5" cy="204.0" r="0.81" fill="#b87820"/><circle cx="215.5" cy="220.9" r="0.98" fill="#c89030"/><path d="M144.5 182 Q139 192 139.5 204" stroke="#182a14" stroke-width="2.6" fill="none"/><path d="M147 182 Q142 192 142.5 205" stroke="#3d7a22" stroke-width="2.2" fill="none"/><ellipse cx="149" cy="194" rx="8" ry="3" fill="#5f9a26" transform="rotate(-70 149 194)"/><ellipse cx="149" cy="193.5" rx="5.4" ry="1.1" fill="#b4dc60" opacity="0.7" transform="rotate(-70 149 194)"/><ellipse cx="156" cy="196" rx="8.5" ry="2.8" fill="#86bc34" transform="rotate(-62 156 196)"/><ellipse cx="156" cy="195.5" rx="5.8" ry="1.0" fill="#cfe87c" opacity="0.7" transform="rotate(-62 156 196)"/><ellipse cx="152" cy="201" rx="3" ry="2.2" fill="#a4cf4a" transform="rotate(0 152 201)"/><ellipse cx="152" cy="200.5" rx="2.0" ry="0.8" fill="#dff09a" opacity="0.7" transform="rotate(0 152 201)"/><ellipse cx="162" cy="190" rx="5" ry="2.3" fill="#78aa2e" transform="rotate(-40 162 190)"/><ellipse cx="162" cy="189.5" rx="3.4" ry="0.8" fill="#c0e070" opacity="0.7" transform="rotate(-40 162 190)"/><ellipse cx="174.5" cy="199" rx="12.5" ry="4.2" fill="#2f7424" transform="rotate(-52 174.5 199)"/><ellipse cx="174.5" cy="198.5" rx="8.5" ry="1.5" fill="#6fb040" opacity="0.7" transform="rotate(-52 174.5 199)"/><ellipse cx="198" cy="198.8" rx="16" ry="5" fill="#b4cf52" transform="rotate(-14 198 198.8)"/><ellipse cx="198" cy="198.3" rx="10.9" ry="1.8" fill="#dce88a" opacity="0.7" transform="rotate(-14 198 198.8)"/><ellipse cx="202.5" cy="187.5" rx="6.5" ry="4" fill="#9cc840" transform="rotate(-28 202.5 187.5)"/><ellipse cx="202.5" cy="187.0" rx="4.4" ry="1.4" fill="#d4ea80" opacity="0.7" transform="rotate(-28 202.5 187.5)"/><ellipse cx="219" cy="191" rx="5.5" ry="9" fill="#4f9224" transform="rotate(-22 219 191)"/><ellipse cx="219" cy="190.5" rx="3.7" ry="3.2" fill="#9ad048" opacity="0.7" transform="rotate(-22 219 191)"/><ellipse cx="204" cy="210.5" rx="6.5" ry="5" fill="#7fb030" transform="rotate(-38 204 210.5)"/><ellipse cx="204" cy="210.0" rx="4.4" ry="1.8" fill="#c4e070" opacity="0.7" transform="rotate(-38 204 210.5)"/><ellipse cx="217" cy="213" rx="7.5" ry="4.4" fill="#a6d04a" transform="rotate(8 217 213)"/><ellipse cx="217" cy="212.5" rx="5.1" ry="1.6" fill="#dcee90" opacity="0.7" transform="rotate(8 217 213)"/><ellipse cx="210.5" cy="224.5" rx="12.5" ry="4.6" fill="#98c636" transform="rotate(-16 210.5 224.5)"/><ellipse cx="210.5" cy="224.0" rx="8.5" ry="1.7" fill="#d6ea78" opacity="0.7" transform="rotate(-16 210.5 224.5)"/><ellipse cx="186" cy="188" rx="4" ry="2" fill="#88b838" transform="rotate(15 186 188)"/><ellipse cx="186" cy="187.5" rx="2.7" ry="0.7" fill="#c8e078" opacity="0.7" transform="rotate(15 186 188)"/><g stroke="#a8d868" stroke-width="0.5" fill="none" opacity="0.8"><path d="M170 205 l3 -2"/><path d="M172.5 201 l3 -2"/><path d="M175 197 l3 -2"/><path d="M177.5 193.5 l2.6 -1.8"/></g><circle cx="190.3" cy="189.8" r="1.6" fill="#17100e"/><circle cx="186.4" cy="193.7" r="1.5" fill="#17100e"/><circle cx="187.7" cy="217.7" r="1.6" fill="#17100e"/><circle cx="183.8" cy="224.2" r="1.5" fill="#17100e"/><circle cx="171.5" cy="221.6" r="1.4" fill="#17100e"/><circle cx="191" cy="220" r="1.2" fill="#17100e"/><circle cx="214" cy="203" r="1.5" fill="#17100e"/><circle cx="216.5" cy="206" r="1.3" fill="#17100e"/><circle cx="170" cy="212" r="1.2" fill="#17100e"/><circle cx="208" cy="196" r="1.1" fill="#17100e"/><circle cx="196" cy="226" r="1.2" fill="#17100e"/><circle cx="166" cy="189" r="1.1" fill="#17100e"/><circle cx="169" cy="214.5" r="0.8" fill="#d8402a"/><circle cx="177" cy="218" r="0.8" fill="#d8402a"/><circle cx="196.5" cy="222" r="0.8" fill="#d8402a"/><circle cx="185" cy="208" r="0.8" fill="#d8402a"/><circle cx="201" cy="216" r="0.8" fill="#d8402a"/><path d="M165 223.5 Q190 236.5 225 228 V237 H165Z" fill="#512a14"/><path d="M165 223.5 Q190 236.5 225 228" stroke="#7a4422" stroke-width="0.9" fill="none"/><path d="M186 237 Q205 232 225 233.5 V237Z" fill="#7a3e22"/></g></g></g><rect x="127.5" y="204.8" width="39.3" height="31.2" fill="#3b6c1e" opacity="0.86"/><g font-family='"Liberation Serif",serif' font-size="2.2" fill="#f4f8ec" font-weight="bold" opacity="1"><text x="132.00" y="208.00" textLength="31.00" lengthAdjust="spacingAndGlyphs">irure dolor in reprehenderit</text><text x="132.00" y="211.20" textLength="31.00" lengthAdjust="spacingAndGlyphs">in voluptate velit esse</text><text x="132.00" y="214.40" textLength="31.00" lengthAdjust="spacingAndGlyphs">cillum dolore eu fugiat nulla</text><text x="132.00" y="217.60" textLength="31.00" lengthAdjust="spacingAndGlyphs">pariatur. Excepteur sint</text><text x="132.00" y="220.80" textLength="31.00" lengthAdjust="spacingAndGlyphs">occaecat cupidatat non</text><text x="132.00" y="224.00" textLength="31.00" lengthAdjust="spacingAndGlyphs">proident, sunt in culpa qui</text><text x="132.00" y="227.20" textLength="31.00" lengthAdjust="spacingAndGlyphs">officia deserunt mollit anim</text><text x="132.00" y="230.40" textLength="24.80" lengthAdjust="spacingAndGlyphs">id est laborum. Sed ut</text></g></svg></div>
<div class="lbl" style="left:136.0px;top:241.0px;width:80px">Cookbook</div>
<div class="th" style="left:239px;top:165px;width:98px;height:72px"><svg width="98" height="72" viewBox="239 165 98 72"><rect x="239.5" y="165.5" width="96.5" height="70.5" fill="#fefefe"/><g fill="none" stroke="#cfcfcf" stroke-width="0.4" stroke-dasharray="0.5 0.4"><rect x="244.4" y="169.3" width="86.9" height="61.9"/><line x1="244.4" y1="181.1" x2="331.3" y2="181.1"/><line x1="286" y1="181.1" x2="286" y2="231.2"/><line x1="289.2" y1="181.1" x2="289.2" y2="231.2"/><line x1="247" y1="169.3" x2="247" y2="231.2" opacity="0.6"/><line x1="328.6" y1="169.3" x2="328.6" y2="231.2" opacity="0.6"/></g><text x="287.7" y="175.6" text-anchor="middle" font-family='"Liberation Serif",serif' font-size="4.8" fill="#8a8a8a" textLength="11.8" lengthAdjust="spacingAndGlyphs">Blank</text></svg></div>
<div class="lbl" style="left:248.0px;top:241.0px;width:80px">Blank</div>
<div class="th" style="left:26px;top:298px;width:76px;height:98px"><svg width="76" height="98" viewBox="26 298 76 98"><rect x="26.5" y="298.5" width="74.5" height="97" fill="#f1ede2"/><text x="63.7" y="303.8" text-anchor="middle" font-family='"Liberation Serif",serif' font-style="italic" font-size="1.9" fill="#d9604a">Chapter 1</text><text x="63.2" y="316.2" text-anchor="middle" font-family='"Liberation Serif",serif' font-size="7" fill="#3a3a3a" textLength="50" lengthAdjust="spacingAndGlyphs">Once Upon a Time</text><g font-family='"Liberation Serif",serif' font-size="2.2" fill="#4a4a48" font-weight="normal" opacity="1"><text x="33.40" y="329.30" textLength="60.30" lengthAdjust="spacingAndGlyphs">perspiciatis unde omnis iste natus error sit voluptatem</text><text x="33.40" y="332.05" textLength="60.30" lengthAdjust="spacingAndGlyphs">accusantium doloremque laudantium, totam rem aperiam,</text><text x="33.40" y="334.80" textLength="60.30" lengthAdjust="spacingAndGlyphs">eaque ipsa quae ab illo inventore veritatis et quasi</text><text x="33.40" y="337.55" textLength="60.30" lengthAdjust="spacingAndGlyphs">architecto beatae vitae dicta sunt explicabo. Nemo enim</text><text x="33.40" y="340.30" textLength="60.30" lengthAdjust="spacingAndGlyphs">ipsam voluptatem quia voluptas sit aspernatur aut odit</text><text x="33.40" y="343.05" textLength="60.30" lengthAdjust="spacingAndGlyphs">aut fugit, sed quia consequuntur magni dolores eos qui</text><text x="33.40" y="345.80" textLength="42.21" lengthAdjust="spacingAndGlyphs">ratione voluptatem sequi nesciunt.</text></g><g font-family='"Liberation Serif",serif' font-size="2.2" fill="#4a4a48" font-weight="normal" opacity="1"><text x="33.40" y="349.80" textLength="60.30" lengthAdjust="spacingAndGlyphs">Lorem ipsum dolor sit amet, consectetur adipiscing elit,</text><text x="33.40" y="352.33" textLength="60.30" lengthAdjust="spacingAndGlyphs">sed do eiusmod tempor incididunt ut labore et dolore</text><text x="33.40" y="354.87" textLength="60.30" lengthAdjust="spacingAndGlyphs">magna aliqua. Ut enim ad minim veniam, quis nostrud</text><text x="33.40" y="357.40" textLength="60.30" lengthAdjust="spacingAndGlyphs">exercitation ullamco laboris nisi ut aliquip ex ea</text><text x="33.40" y="359.93" textLength="60.30" lengthAdjust="spacingAndGlyphs">commodo consequat. Duis aute irure dolor in reprehenderit</text><text x="33.40" y="362.47" textLength="60.30" lengthAdjust="spacingAndGlyphs">in voluptate velit esse cillum dolore eu fugiat nulla</text><text x="33.40" y="365.00" textLength="60.30" lengthAdjust="spacingAndGlyphs">pariatur. Excepteur sint occaecat cupidatat non proident,</text><text x="33.40" y="367.53" textLength="60.30" lengthAdjust="spacingAndGlyphs">sunt in culpa qui officia deserunt mollit anim id est</text><text x="33.40" y="370.07" textLength="60.30" lengthAdjust="spacingAndGlyphs">laborum. Sed ut perspiciatis unde omnis iste natus error</text><text x="33.40" y="372.60" textLength="48.24" lengthAdjust="spacingAndGlyphs">sit voluptatem accusantium doloremque</text></g><g font-family='"Liberation Serif",serif' font-size="2.2" fill="#4a4a48" font-weight="normal" opacity="1"><text x="33.40" y="376.00" textLength="60.30" lengthAdjust="spacingAndGlyphs">laudantium, totam rem aperiam, eaque ipsa quae ab illo</text><text x="33.40" y="378.65" textLength="60.30" lengthAdjust="spacingAndGlyphs">inventore veritatis et quasi architecto beatae vitae</text><text x="33.40" y="381.30" textLength="60.30" lengthAdjust="spacingAndGlyphs">dicta sunt explicabo. Nemo enim ipsam voluptatem quia</text><text x="33.40" y="383.95" textLength="60.30" lengthAdjust="spacingAndGlyphs">voluptas sit aspernatur aut odit aut fugit, sed quia</text><text x="33.40" y="386.60" textLength="45.22" lengthAdjust="spacingAndGlyphs">consequuntur magni dolores eos qui ratione</text></g></svg></div>
<div class="lbl" style="left:24.0px;top:400.1px;width:80px">Classic Text</div>
<div class="th" style="left:138px;top:298px;width:76px;height:98px"><svg width="76" height="98" viewBox="138 298 76 98"><defs><clipPath id="cp2"><rect x="138.6" y="298.6" width="74.8" height="96.6"/></clipPath><linearGradient id="gp2s" x1="0" y1="0" x2="0.3" y2="1"><stop offset="0" stop-color="#5a8fd0"/><stop offset="0.3" stop-color="#86b0de"/><stop offset="0.5" stop-color="#bcd5ec"/><stop offset="0.62" stop-color="#dce8f0"/><stop offset="1" stop-color="#e4e8ea"/></linearGradient><linearGradient id="gp2w" x1="0" y1="0" x2="1" y2="0.4"><stop offset="0" stop-color="#dcbc7c"/><stop offset="0.45" stop-color="#ecdcb4"/><stop offset="1" stop-color="#f4eedc"/></linearGradient><linearGradient id="gp2p" x1="0" y1="0" x2="0" y2="1"><stop offset="0" stop-color="#3cc0e4"/><stop offset="1" stop-color="#1c8cc4"/></linearGradient><linearGradient id="gp2d" x1="0" y1="0" x2="0" y2="1"><stop offset="0" stop-color="#5a4a42"/><stop offset="1" stop-color="#2a2321"/></linearGradient><filter id="bp2"><feGaussianBlur stdDeviation="0.4"/></filter><filter id="np2" x="0" y="0" width="1" height="1" color-interpolation-filters="sRGB"><feOffset in="SourceGraphic" result="s"/><feTurbulence type="fractalNoise" baseFrequency="0.5" numOctaves="3" seed="8" result="t"/><feColorMatrix in="t" type="matrix" values="0.14 0 0 0 0.430  0.14 0 0 0 0.430  0.14 0 0 0 0.430  0 0 0 0 1" result="g"/><feBlend in="g" in2="s" mode="overlay" result="b"/><feComposite in="b" in2="s" operator="in"/></filter></defs><g clip-path="url(#cp2)"><g filter="url(#np2)"><rect x="138" y="298" width="76" height="98" fill="url(#gp2s)"/><g filter="url(#bp2)"><path d="M138 358 V333 Q140 328 143 331 Q146 329 147.5 335 Q151 334 152 341 L156 348 V358Z" fill="#18241a"/><rect x="138" y="352.5" width="15" height="5.5" fill="#b07a3a"/><rect x="140" y="353.6" width="3" height="3" fill="#f0c070"/><rect x="146" y="353.6" width="4" height="3" fill="#e8b060"/><path d="M138 396 V358.5 H214 V396Z" fill="url(#gp2d)"/><g stroke="#1e1816" stroke-width="0.35" opacity="0.7"><path d="M156 358.5 L146 396 M160 358.5 L154 396 M164 358.5 L162 396 M168 358.5 L170 396 M172 358.5 L178 396"/></g><path d="M138 359 H152.5 L144.8 396 H138Z" fill="url(#gp2p)"/><path d="M154.5 327 L182 313.5 V358.5 H154.5Z" fill="#3a434d"/><path d="M154.5 329.5 L182 315.4 V322 L154.5 334.5Z" fill="#8a949e"/><path d="M152.5 326.6 L182 312.2 V315.4 L152.5 329.8Z" fill="#7f8892"/><path d="M154.5 338 L182 332 V334 L154.5 339.8Z" fill="#20262c"/><path d="M157 342 L180 338 V357 H157Z" fill="#e2b260"/><path d="M161 341 V357 M166 340.4 V357 M171.5 339.6 V357 M176 339 V357" stroke="#2a3036" stroke-width="0.9"/><path d="M158 331 L168 326.6 V334.6 L158 337Z" fill="#c8a058" opacity="0.85"/><path d="M170 326 L180 321.6 V332 L170 334.2Z" fill="#d8b468" opacity="0.9"/><path d="M178 316 L197.5 298 H214 V358.5 H178Z" fill="#444e58"/><path d="M176.5 316.4 L196 298 H201 L178.5 319.5Z" fill="#9aa2aa"/><path d="M183 320.5 L214 301 V352 H183Z" fill="url(#gp2w)"/><g stroke="#2c333a" stroke-width="1.3" fill="none"><path d="M183 333.5 L214 322.5"/><path d="M183 345.5 L214 341"/><path d="M191 315 V353"/><path d="M199.5 309.5 V353"/><path d="M208 304 V353"/><path d="M183 320 V353"/></g><g stroke="#3a424a" stroke-width="0.6" fill="none"><path d="M187 318 V353 M195.2 312.5 V353 M203.8 307 V353 M183 327 L214 312.5 M183 339.5 L214 332"/></g><path d="M183 320.5 L191 315 V333 L183 336Z" fill="#4a545e" opacity="0.7"/><path d="M199.5 322 L208 318.4 V330 L199.5 333Z" fill="#4a545e" opacity="0.55"/><path d="M191 341 L199.5 339.6 V352 H191Z" fill="#3c444c" opacity="0.6"/><path d="M208 304.5 L214 301 V314 L208 317Z" fill="#59636d" opacity="0.6"/><path d="M183 352 H214 V358.5 H183Z" fill="#2a2f36"/><g fill="#ffd98a"><circle cx="158" cy="359" r="0.9"/><circle cx="163" cy="359" r="0.9"/><circle cx="168" cy="359" r="0.9"/><circle cx="173" cy="359" r="0.9"/></g><rect x="172" y="386" width="42" height="10" fill="#1d1a1a"/></g></g></g><rect x="171.7" y="347" width="41.2" height="40.3" fill="#fefefe"/><rect x="175.8" y="350.2" width="2" height="0.4" fill="#555"/><g font-family='"Liberation Sans",sans-serif' font-size="3" fill="#444"><text x="175.8" y="355.4" textLength="19.5" lengthAdjust="spacingAndGlyphs">SUSTAINABLE</text><text x="175.8" y="358.8" textLength="11" lengthAdjust="spacingAndGlyphs">DESIGN</text></g><g font-family='"Liberation Sans",sans-serif' font-size="1.9" fill="#666" font-weight="normal" opacity="1"><text x="175.80" y="364.60" textLength="32.40" lengthAdjust="spacingAndGlyphs">voluptatem sequi nesciunt. Lorem</text><text x="175.80" y="366.98" textLength="32.40" lengthAdjust="spacingAndGlyphs">ipsum dolor sit amet, consectetur</text><text x="175.80" y="369.35" textLength="32.40" lengthAdjust="spacingAndGlyphs">adipiscing elit, sed do eiusmod</text><text x="175.80" y="371.73" textLength="32.40" lengthAdjust="spacingAndGlyphs">tempor incididunt ut labore et</text><text x="175.80" y="374.10" textLength="32.40" lengthAdjust="spacingAndGlyphs">dolore magna aliqua. Ut enim ad</text><text x="175.80" y="376.48" textLength="32.40" lengthAdjust="spacingAndGlyphs">minim veniam, quis nostrud</text><text x="175.80" y="378.85" textLength="32.40" lengthAdjust="spacingAndGlyphs">exercitation ullamco laboris nisi</text><text x="175.80" y="381.23" textLength="32.40" lengthAdjust="spacingAndGlyphs">ut aliquip ex ea commodo</text><text x="175.80" y="383.60" textLength="22.68" lengthAdjust="spacingAndGlyphs">consequat. Duis aute</text></g></svg></div>
<div class="lbl" style="left:136.0px;top:400.1px;width:80px">Photo Book</div>
<div class="th" style="left:250px;top:298px;width:76px;height:98px"><svg width="76" height="98" viewBox="250 298 76 98"><defs><clipPath id="cp3"><rect x="253.3" y="324.8" width="69.8" height="68.3"/></clipPath><linearGradient id="gp3" x1="0" y1="0" x2="0" y2="1"><stop offset="0" stop-color="#a0e8e0"/><stop offset="0.25" stop-color="#58d6ce"/><stop offset="0.55" stop-color="#2ecac6"/><stop offset="0.8" stop-color="#48d0c2"/><stop offset="1" stop-color="#84dec8"/></linearGradient><radialGradient id="gp3l" gradientUnits="userSpaceOnUse" cx="306" cy="326" r="40" gradientTransform="translate(306 326) scale(1 0.75) translate(-306 -326)"><stop offset="0" stop-color="#f6fcfa" stop-opacity="1"/><stop offset="0.45" stop-color="#e4f6f2" stop-opacity="0.8"/><stop offset="1" stop-color="#c4ece6" stop-opacity="0"/></radialGradient><radialGradient id="gp3r" gradientUnits="userSpaceOnUse" cx="322" cy="380" r="30"><stop offset="0" stop-color="#d0f0e0" stop-opacity="0.8"/><stop offset="1" stop-color="#a0e0d0" stop-opacity="0"/></radialGradient><linearGradient id="gp3t" x1="0.9" y1="0" x2="0.1" y2="1"><stop offset="0" stop-color="#cfc4b4"/><stop offset="0.45" stop-color="#a9a594"/><stop offset="1" stop-color="#2f605e"/></linearGradient><filter id="bp3"><feGaussianBlur stdDeviation="0.5"/></filter><filter id="np3" x="0" y="0" width="1" height="1" color-interpolation-filters="sRGB"><feOffset in="SourceGraphic" result="s"/><feTurbulence type="fractalNoise" baseFrequency="0.4" numOctaves="3" seed="12" result="t"/><feColorMatrix in="t" type="matrix" values="0.14 0 0 0 0.430  0.14 0 0 0 0.430  0.14 0 0 0 0.430  0 0 0 0 1" result="g"/><feBlend in="g" in2="s" mode="overlay" result="b"/><feComposite in="b" in2="s" operator="in"/></filter></defs><rect x="250.5" y="298.5" width="74.5" height="97" fill="#fefefe"/><text x="253.2" y="311.5" font-family='"Liberation Serif",serif' font-size="5.5" fill="#7fd3cc">1</text><text x="253" y="318" font-family='"Liberation Sans",sans-serif' font-size="4.3" font-weight="bold" fill="#222" textLength="28.3" lengthAdjust="spacingAndGlyphs">Marine Biology</text><g font-family='"Liberation Sans",sans-serif' font-size="1.9" fill="#444" font-weight="bold" opacity="1"><text x="299.00" y="316.20" textLength="20.80" lengthAdjust="spacingAndGlyphs">irure dolor in</text><text x="299.00" y="318.20" textLength="20.80" lengthAdjust="spacingAndGlyphs">reprehenderit in</text><text x="299.00" y="320.20" textLength="8.32" lengthAdjust="spacingAndGlyphs">voluptate</text></g><g clip-path="url(#cp3)"><g filter="url(#np3)"><rect x="253" y="324.5" width="71" height="69" fill="url(#gp3)"/><rect x="253" y="324.5" width="71" height="45" fill="url(#gp3l)"/><rect x="290" y="350" width="34" height="44" fill="url(#gp3r)"/><g filter="url(#bp3)"><path d="M310 346.5 Q313 343.5 316.5 345 Q319.5 347.5 318.4 350.5 Q315 351.8 311.5 350Z" fill="#9fb1b0"/><path d="M282.5 360 Q288 357.5 293 361.5 Q300 366.5 305.5 369 Q308 372 305.5 374 Q298 374.5 291 370.5 Q284 366 282.5 360Z" fill="#2c5a52"/><path d="M286 362 Q293 366 303 371.5" stroke="#5f8f80" stroke-width="0.8" fill="none" opacity="0.8"/><path d="M275.5 356 Q277 348.5 286 345.5 Q298 342 309 344.5 Q312.5 346.5 310 350.5 Q304 356.5 294 358.5 Q283 360.5 275.5 356Z" fill="url(#gp3t)"/><path d="M278 355.5 Q288 359 300 355 Q307 352 310 349" stroke="#2a5450" stroke-width="1.3" fill="none" opacity="0.75"/><path d="M274 358 Q280 361.5 290 360.5 Q296 359.5 300 357 Q292 362 284 363.5 Q277 363.5 274 358Z" fill="#d2cc96"/><path d="M268 353 Q271 351 273.5 354 Q275.5 357 274 359.5 Q270.5 358.5 268.5 356Z" fill="#6a9a96"/><path d="M262 361.5 Q263.5 357.5 268.5 357 Q273 357 274.5 360 Q273.5 364 268.5 365.2 Q263.5 365.5 262 361.5Z" fill="#4c6c52"/><path d="M262.5 362.5 Q266 365.8 271.5 364 Q268 366.8 264.5 365.6Z" fill="#c6c474"/><circle cx="265.3" cy="360.4" r="0.7" fill="#1a2a24"/></g></g></g></svg></div>
<div class="lbl" style="left:248.0px;top:400.1px;width:80px">Modern Basic</div>
<div class="th" style="left:362px;top:298px;width:76px;height:98px"><svg width="76" height="98" viewBox="362 298 76 98"><defs><filter id="bp4"><feGaussianBlur stdDeviation="0.3"/></filter></defs><rect x="362.5" y="298.5" width="74.5" height="97" fill="#f9f1d6"/><g filter="url(#bp4)"><g fill="#56a8c4"><ellipse cx="372.5" cy="312" rx="3.6" ry="2.5"/><ellipse cx="370.2" cy="319" rx="2.2" ry="2.8"/><rect x="369.9" y="321" width="0.6" height="5"/><ellipse cx="383.5" cy="311.5" rx="2.6" ry="1.4"/><ellipse cx="428" cy="312" rx="4" ry="3"/><rect x="427.7" y="314" width="0.6" height="6"/><ellipse cx="430" cy="320" rx="1.6" ry="1.2" opacity="0.6"/></g><circle cx="406" cy="311.8" r="2.3" fill="#f2a63a"/><g stroke="#f2a63a" stroke-width="0.45"><path d="M406 308.6 V307.4 M406 315 V316.2 M402.8 311.8 H401.6 M409.2 311.8 H410.4 M403.7 309.5 L402.9 308.7 M408.3 309.5 L409.1 308.7 M403.7 314.1 L402.9 314.9 M408.3 314.1 L409.1 314.9"/></g><path d="M379 313.2 H391 L396.5 322 V327 H380Z" fill="#22221a"/><rect x="377.8" y="309.2" width="1.8" height="4.5" fill="#22221a"/><rect x="388.5" y="310" width="1.8" height="4" fill="#22221a"/><path d="M373.5 326.5 V319.5 L379.2 313.4 L385 319.5 V326.5Z" fill="#e9a62e"/><path d="M372.6 320.2 L379.2 313 L385.8 320.2" stroke="#22221a" stroke-width="0.8" fill="none"/><rect x="376.6" y="317.5" width="1.8" height="2.6" fill="#22221a"/><rect x="380" y="317.5" width="1.8" height="2.6" fill="#22221a"/><rect x="378.2" y="322" width="2" height="2.6" fill="#22221a"/><path d="M397 322 L400 309.5 L403 322Z" fill="#e9a62e"/><path d="M399.3 312 L400 308.2 L400.7 312Z" fill="#22221a"/><rect x="399.3" y="317" width="1.4" height="2.2" fill="#22221a"/><path d="M402 326.5 V320 L404 317 H410 V326.5Z" fill="#22221a"/><path d="M397 326.5 V321 H403 V326.5Z" fill="#e9a62e"/><path d="M410 333.2 V318 Q410 311 415 311 Q420 311 420 318 V333.2Z" fill="#a5ad2a"/><path d="M411.5 311.5 L413 308.3 L415 310 L417 308.3 L418.5 311.5Z" fill="#22221a"/><path d="M411 308.6 H419" stroke="#22221a" stroke-width="0.5"/><g fill="#22221a"><rect x="414" y="314" width="2" height="3.2" rx="0.9"/><rect x="412" y="320.5" width="1.6" height="2.6"/><rect x="416.4" y="320.5" width="1.6" height="2.6"/><rect x="412" y="326.5" width="1.6" height="2.8"/><rect x="416.4" y="326.5" width="1.6" height="2.8"/></g><path d="M420 333.2 V326 L423 323.5 H430 L432.6 326 V333.2Z" fill="#a5ad2a"/><rect x="425" y="318" width="1.8" height="6" fill="#22221a"/><path d="M421 326.3 H432" stroke="#22221a" stroke-width="0.7"/><rect x="424.5" y="328" width="1.6" height="2.6" fill="#22221a"/><rect x="428.2" y="328" width="1.6" height="2.6" fill="#22221a"/><path d="M429.6 321 v-3.4 M431.4 321.5 v-2.6" stroke="#22221a" stroke-width="0.45"/><path d="M368 333.2 V328.5 L371 325 H379 L384.5 329 V333.2Z" fill="#a5ad2a"/><path d="M368 328.8 L371 325 H378 L381 328.8Z" fill="#22221a"/><circle cx="378.6" cy="330.6" r="0.9" fill="#22221a"/><rect x="371.6" y="322.5" width="1" height="3" fill="#22221a"/><rect x="385" y="328.8" width="22" height="4.4" fill="#3e9aba"/><path d="M384.2 329.2 L388.5 324.8 H403 L407.6 329.2Z" fill="#22221a"/><path d="M388.6 325.2 L391.6 322 H400 L403 325.2Z" fill="#22221a"/><rect x="392" y="321.3" width="7.6" height="1.5" fill="#58b4d0"/><g fill="#22221a"><rect x="387" y="330" width="1.4" height="2.4"/><rect x="390" y="330" width="1.4" height="2.4"/><rect x="393" y="330" width="1.4" height="2.4"/></g><rect x="368" y="332.7" width="64.6" height="0.7" fill="#22221a"/></g><text x="369.5" y="347.6" font-family='"Liberation Serif",serif' font-size="12" fill="#6fcfd0" textLength="4.2" lengthAdjust="spacingAndGlyphs">1</text><g font-family='"Liberation Serif",serif' font-size="3.2" fill="#4d5560"><text x="368" y="353" textLength="16.5" lengthAdjust="spacingAndGlyphs">Our Humble</text><text x="368" y="357.6" textLength="15.5" lengthAdjust="spacingAndGlyphs">Beginnings</text></g><g font-family='"Liberation Serif",serif' font-size="2.0" fill="#55554e" font-weight="normal" opacity="1"><text x="389.70" y="339.00" textLength="42.00" lengthAdjust="spacingAndGlyphs">velit esse cillum dolore eu fugiat nulla</text><text x="389.70" y="341.40" textLength="42.00" lengthAdjust="spacingAndGlyphs">pariatur. Excepteur sint occaecat</text><text x="389.70" y="343.80" textLength="42.00" lengthAdjust="spacingAndGlyphs">cupidatat non proident, sunt in culpa qui</text><text x="389.70" y="346.20" textLength="42.00" lengthAdjust="spacingAndGlyphs">officia deserunt mollit anim id est</text><text x="389.70" y="348.60" textLength="42.00" lengthAdjust="spacingAndGlyphs">laborum. Sed ut perspiciatis unde omnis</text><text x="389.70" y="351.00" textLength="42.00" lengthAdjust="spacingAndGlyphs">iste natus error sit voluptatem</text><text x="389.70" y="353.40" textLength="42.00" lengthAdjust="spacingAndGlyphs">accusantium doloremque laudantium, totam</text><text x="389.70" y="355.80" textLength="42.00" lengthAdjust="spacingAndGlyphs">rem aperiam, eaque ipsa quae ab illo</text><text x="389.70" y="358.20" textLength="33.60" lengthAdjust="spacingAndGlyphs">inventore veritatis et quasi</text></g><g font-family='"Liberation Serif",serif' font-size="2.0" fill="#55554e" font-weight="normal" opacity="1"><text x="389.70" y="361.60" textLength="42.00" lengthAdjust="spacingAndGlyphs">architecto beatae vitae dicta sunt</text><text x="389.70" y="364.03" textLength="42.00" lengthAdjust="spacingAndGlyphs">explicabo. Nemo enim ipsam voluptatem</text><text x="389.70" y="366.46" textLength="42.00" lengthAdjust="spacingAndGlyphs">quia voluptas sit aspernatur aut odit aut</text><text x="389.70" y="368.89" textLength="42.00" lengthAdjust="spacingAndGlyphs">fugit, sed quia consequuntur magni</text><text x="389.70" y="371.31" textLength="42.00" lengthAdjust="spacingAndGlyphs">dolores eos qui ratione voluptatem sequi</text><text x="389.70" y="373.74" textLength="42.00" lengthAdjust="spacingAndGlyphs">nesciunt. Lorem ipsum dolor sit amet,</text><text x="389.70" y="376.17" textLength="42.00" lengthAdjust="spacingAndGlyphs">consectetur adipiscing elit, sed do</text><text x="389.70" y="378.60" textLength="25.20" lengthAdjust="spacingAndGlyphs">eiusmod tempor</text></g><g font-family='"Liberation Serif",serif' font-size="2.0" fill="#55554e" font-weight="normal" opacity="1"><text x="389.70" y="382.00" textLength="42.00" lengthAdjust="spacingAndGlyphs">incididunt ut labore et dolore magna</text><text x="389.70" y="384.53" textLength="42.00" lengthAdjust="spacingAndGlyphs">aliqua. Ut enim ad minim veniam, quis</text><text x="389.70" y="387.07" textLength="42.00" lengthAdjust="spacingAndGlyphs">nostrud exercitation ullamco laboris nisi</text><text x="389.70" y="389.60" textLength="37.80" lengthAdjust="spacingAndGlyphs">ut aliquip ex ea commodo consequat.</text></g></svg></div>
<div class="lbl" style="left:360.0px;top:400.1px;width:80px">Gazette</div>
<div class="th" style="left:474px;top:298px;width:76px;height:98px"><svg width="76" height="98" viewBox="474 298 76 98"><defs><clipPath id="cp5"><rect x="474.8" y="299" width="74.4" height="49.6"/></clipPath><radialGradient id="gp5g" gradientUnits="userSpaceOnUse" cx="500" cy="316" r="30"><stop offset="0" stop-color="#ee8a3c"/><stop offset="0.35" stop-color="#d2702a"/><stop offset="0.7" stop-color="#b4561e"/><stop offset="1" stop-color="#7e3812"/></radialGradient><filter id="bp5"><feGaussianBlur stdDeviation="0.45"/></filter><filter id="bp5b"><feGaussianBlur stdDeviation="1"/></filter><filter id="np5" x="0" y="0" width="1" height="1" color-interpolation-filters="sRGB"><feOffset in="SourceGraphic" result="s"/><feTurbulence type="fractalNoise" baseFrequency="0.25 0.5" numOctaves="3" seed="21" result="t"/><feColorMatrix in="t" type="matrix" values="0.4 0 0 0 0.300  0.4 0 0 0 0.300  0.4 0 0 0 0.300  0 0 0 0 1" result="g"/><feBlend in="g" in2="s" mode="overlay" result="b"/><feComposite in="b" in2="s" operator="in"/></filter></defs><rect x="474.5" y="298.5" width="74.5" height="97" fill="#fefefe"/><g clip-path="url(#cp5)"><g filter="url(#np5)"><rect x="474.5" y="298.5" width="75" height="50.5" fill="#0c0a09"/><g filter="url(#bp5)"><path d="M477 299 H482 L476 318 H474.5 V305Z" fill="#2e2b29"/><path d="M484.5 299 H490.5 L480 318 L477.5 316Z" fill="#5e5a56"/><path d="M493 299 H497 L489 310 L487 308Z" fill="#3a3734" opacity="0.8"/><path d="M505 299 H528 L520 312 L508 314Z" fill="#1d1a18"/><path d="M475 322 Q480 318 486 317 Q490 311 496 306.5 Q501 304 506 306.5 Q509 309 507 313.5 Q505 317 507 320 L513 329 Q518 331 522.5 334 Q526 338 524.5 343 Q523 347 520 349 H486 Q479 345 476.5 338 Q474.5 330 475 322Z" fill="url(#gp5g)"/><path d="M493 309 Q498 305.5 503.5 307.5" stroke="#f8b070" stroke-width="1.1" fill="none" opacity="0.8"/><path d="M512 333 Q520 336 521 343" stroke="#8a3c14" stroke-width="1.4" fill="none" opacity="0.7"/><path d="M474.5 318.5 Q479 317 484 318.5 L483.5 323 Q479 322 474.5 324Z" fill="#f2cf9e"/><path d="M474.5 326 Q479 325.5 483 327.5 L481 331 Q478 329.5 474.5 330.5Z" fill="#eab87e"/><g transform="rotate(-30 504 328)"><rect x="499" y="322" width="9.5" height="5" fill="#15100d"/><rect x="499.5" y="329.5" width="9.5" height="5.2" fill="#1a1410"/><rect x="500" y="323.4" width="7.5" height="0.6" fill="#5a544e"/></g><path d="M506.5 321.5 L549.5 298.8 V304.6 L510 327.5Z" fill="#7b5238"/><path d="M506.5 321.5 L549.5 298.8 V299.9 L507 322.6Z" fill="#cfa77c"/><g stroke="#c4a480" stroke-width="0.4" opacity="0.85"><path d="M513 318.2 l2.6 5 M518.5 315.3 l2.5 4.9 M524 312.4 l2.4 4.8 M529.5 309.5 l2.3 4.7 M535 306.6 l2.2 4.6 M540.5 303.7 l2.1 4.5 M545.5 301 l2 4.4"/></g><path d="M529 309 Q531 305 536 304.5 Q541.5 305 543 311 Q544.5 320 542.5 327 Q540 330.5 535.5 329.5 Q531.5 326 530.5 319Z" fill="#bf8a6c"/><path d="M531.5 308 q2 5.5 1.2 11 M535 306.5 q2 6.5 1 13.5 M538.6 306.8 q1.6 6 0.2 12.4" stroke="#8a5a44" stroke-width="0.6" fill="none"/><path d="M531.5 328.5 Q537 331 544 327.5 L545 333 Q538 336 532.5 333.5Z" fill="#5c5c48"/><path d="M533 334 Q540 336 549.5 331 V349 H534Z" fill="#161311"/><path d="M476.5 343 Q478 334.5 486 331 Q494 329 499 333 Q502 337.5 499 343 Q496 347 494 349 H478Z" fill="#8c5c48"/><path d="M482 336 Q490 333.5 497 336.5 M480.5 341 Q488 338 496 341.5" stroke="#5c382c" stroke-width="0.7" fill="none"/><path d="M487.7 330 L494.5 329.2 L495 337 L488.4 337.6Z" fill="#120e0c"/><path d="M474.5 333 L479 336 L476 349 H474.5Z" fill="#3c3834"/></g></g></g><text x="511.8" y="356.3" text-anchor="middle" font-family='"Liberation Serif",serif' font-size="2" fill="#d9604a">1</text><rect x="480" y="358" width="63" height="0.25" fill="#cfcfcf"/><text x="511.7" y="365.8" text-anchor="middle" font-family='"Liberation Serif",serif' font-size="5.4" fill="#444" textLength="46" lengthAdjust="spacingAndGlyphs">LIFE ON THE ROAD</text><g font-family='"Liberation Serif",serif' font-size="2.1" fill="#555" font-weight="normal" opacity="1"><text x="480.00" y="373.40" textLength="62.50" lengthAdjust="spacingAndGlyphs">Duis aute irure dolor in reprehenderit in voluptate velit</text><text x="480.00" y="376.20" textLength="62.50" lengthAdjust="spacingAndGlyphs">esse cillum dolore eu fugiat nulla pariatur. Excepteur sint</text><text x="480.00" y="379.00" textLength="62.50" lengthAdjust="spacingAndGlyphs">occaecat cupidatat non proident, sunt in culpa qui officia</text><text x="480.00" y="381.80" textLength="62.50" lengthAdjust="spacingAndGlyphs">deserunt mollit anim id est laborum. Sed ut perspiciatis</text><text x="480.00" y="384.60" textLength="62.50" lengthAdjust="spacingAndGlyphs">unde omnis iste natus error sit voluptatem accusantium</text><text x="480.00" y="387.40" textLength="59.38" lengthAdjust="spacingAndGlyphs">doloremque laudantium, totam rem aperiam, eaque ipsa</text></g></svg></div>
<div class="lbl" style="left:472.0px;top:400.1px;width:80px">Biography</div>
<div class="th" style="left:586px;top:298px;width:76px;height:98px"><svg width="76" height="98" viewBox="586 298 76 98"><defs><clipPath id="cp6"><rect x="592.3" y="322.6" width="64.9" height="34.3"/></clipPath><linearGradient id="gp6" x1="0" y1="0" x2="1" y2="0.25"><stop offset="0" stop-color="#c9a894"/><stop offset="0.18" stop-color="#f0d9a4"/><stop offset="0.55" stop-color="#f7e4a6"/><stop offset="0.8" stop-color="#f4c458"/><stop offset="1" stop-color="#e6a238"/></linearGradient><radialGradient id="gp6s" gradientUnits="userSpaceOnUse" cx="640.7" cy="340" r="20"><stop offset="0" stop-color="#fffbe0"/><stop offset="0.3" stop-color="#fff0a0"/><stop offset="0.55" stop-color="#f8c040" stop-opacity="0.85"/><stop offset="1" stop-color="#e89020" stop-opacity="0"/></radialGradient><linearGradient id="gp6a" x1="0" y1="0" x2="1" y2="0"><stop offset="0" stop-color="#a87a58"/><stop offset="0.4" stop-color="#c08a54"/><stop offset="1" stop-color="#cc7a28"/></linearGradient><linearGradient id="gp6l" x1="0" y1="0" x2="1" y2="1"><stop offset="0" stop-color="#4e3270"/><stop offset="0.6" stop-color="#74528a"/><stop offset="1" stop-color="#8a5a6a"/></linearGradient><filter id="bp6"><feGaussianBlur stdDeviation="0.55"/></filter><filter id="np6" x="0" y="0" width="1" height="1" color-interpolation-filters="sRGB"><feOffset in="SourceGraphic" result="s"/><feTurbulence type="fractalNoise" baseFrequency="0.5" numOctaves="3" seed="31" result="t"/><feColorMatrix in="t" type="matrix" values="0.3 0 0 0 0.350  0.3 0 0 0 0.350  0.3 0 0 0 0.350  0 0 0 0 1" result="g"/><feBlend in="g" in2="s" mode="overlay" result="b"/><feComposite in="b" in2="s" operator="in"/></filter></defs><rect x="586.5" y="298.5" width="74.5" height="97" fill="#464646"/><rect x="587.5" y="299.5" width="72.5" height="95" fill="#2b2b2b"/><rect x="590.8" y="302" width="66.2" height="1" fill="#8c8c8c"/><text x="590.8" y="311.8" font-family='"Liberation Serif",serif' font-size="5.3" fill="#f4f4f4" textLength="60" lengthAdjust="spacingAndGlyphs">A Perfect Evening in Paris</text><g clip-path="url(#cp6)"><g filter="url(#np6)"><rect x="592" y="322" width="66" height="36" fill="url(#gp6)"/><g filter="url(#bp6)"><path d="M592 322 H597 Q594 326 592 331Z" fill="#6a4678" opacity="0.8"/><path d="M592 328 L596 326.5 L599 329 L603 331 L606 335 L610 338.5 V357 H592Z" fill="url(#gp6l)"/><path d="M606.6 325.8 H638 V328.2 H636.8 V357 H609.2 V328.2 H606.6Z" fill="url(#gp6a)"/><rect x="609.2" y="332.6" width="27.6" height="0.8" fill="#8a5a38" opacity="0.8"/><path d="M618.5 357 V341.5 Q618.5 337 622.9 337 Q627.3 337 627.3 341.5 V357Z" fill="#fff6cc"/><circle cx="640.7" cy="340" r="20" fill="url(#gp6s)"/><path d="M645.5 357 V346 Q647 338 650.5 333.5 Q654 330 658 329 V357Z" fill="#a85c1a" opacity="0.9"/><path d="M651 357 V343 Q654 337 658 335 V357Z" fill="#7a3e14" opacity="0.8"/><path d="M592 350.5 Q604 349 618 351.5 Q630 353 640 352 Q650 351 658 352.5 V357.5 H592Z" fill="#46264a"/><path d="M626 357.5 V353 Q640 351.6 658 352.8 V357.5Z" fill="#c06c1c" opacity="0.85"/><g fill="#f6eee0"><rect x="603" y="352.4" width="4" height="1.3" rx="0.5"/><rect x="609" y="353.2" width="5" height="1.4" rx="0.5"/><rect x="616" y="353" width="2.4" height="1.2" rx="0.5"/></g></g></g></g><g font-family='"Liberation Serif",serif' font-size="2.3" fill="#fff" font-weight="bold" opacity="1"><text x="592.90" y="361.20" textLength="64.10" lengthAdjust="spacingAndGlyphs">quae ab illo inventore veritatis et quasi architecto</text><text x="592.90" y="363.60" textLength="64.10" lengthAdjust="spacingAndGlyphs">beatae vitae dicta sunt explicabo. Nemo enim ipsam</text><text x="592.90" y="366.00" textLength="64.10" lengthAdjust="spacingAndGlyphs">voluptatem quia voluptas sit aspernatur aut odit aut</text><text x="592.90" y="368.40" textLength="62.82" lengthAdjust="spacingAndGlyphs">fugit, sed quia consequuntur magni dolores eos qui</text></g><g font-family='"Liberation Serif",serif' font-size="2.0" fill="#e0e0e0" font-weight="normal" opacity="1"><text x="592.90" y="372.20" textLength="29.50" lengthAdjust="spacingAndGlyphs">ratione voluptatem sequi</text><text x="592.90" y="374.54" textLength="29.50" lengthAdjust="spacingAndGlyphs">nesciunt. Lorem ipsum dolor</text><text x="592.90" y="376.89" textLength="29.50" lengthAdjust="spacingAndGlyphs">sit amet, consectetur</text><text x="592.90" y="379.23" textLength="29.50" lengthAdjust="spacingAndGlyphs">adipiscing elit, sed do</text><text x="592.90" y="381.57" textLength="29.50" lengthAdjust="spacingAndGlyphs">eiusmod tempor incididunt ut</text><text x="592.90" y="383.91" textLength="29.50" lengthAdjust="spacingAndGlyphs">labore et dolore magna</text><text x="592.90" y="386.26" textLength="29.50" lengthAdjust="spacingAndGlyphs">aliqua. Ut enim ad minim</text><text x="592.90" y="388.60" textLength="26.55" lengthAdjust="spacingAndGlyphs">veniam, quis nostrud</text></g><g font-family='"Liberation Serif",serif' font-size="2.0" fill="#e0e0e0" font-weight="normal" opacity="1"><text x="624.60" y="372.20" textLength="32.40" lengthAdjust="spacingAndGlyphs">exercitation ullamco laboris</text><text x="624.60" y="374.54" textLength="32.40" lengthAdjust="spacingAndGlyphs">nisi ut aliquip ex ea commodo</text><text x="624.60" y="376.89" textLength="32.40" lengthAdjust="spacingAndGlyphs">consequat. Duis aute irure</text><text x="624.60" y="379.23" textLength="32.40" lengthAdjust="spacingAndGlyphs">dolor in reprehenderit in</text><text x="624.60" y="381.57" textLength="32.40" lengthAdjust="spacingAndGlyphs">voluptate velit esse cillum</text><text x="624.60" y="383.91" textLength="32.40" lengthAdjust="spacingAndGlyphs">dolore eu fugiat nulla</text><text x="624.60" y="386.26" textLength="32.40" lengthAdjust="spacingAndGlyphs">pariatur. Excepteur sint</text><text x="624.60" y="388.60" textLength="29.16" lengthAdjust="spacingAndGlyphs">occaecat cupidatat non</text></g></svg></div>
<div class="lbl" style="left:584.0px;top:400.1px;width:80px">Charcoal</div>
<div class="th" style="left:698px;top:298px;width:76px;height:98px"><svg width="76" height="98" viewBox="698 298 76 98"><rect x="698.5" y="298.5" width="75" height="97" fill="#fefefe"/><g fill="none" stroke="#d0d0d0" stroke-width="0.4" stroke-dasharray="0.5 0.4"><rect x="705.4" y="304.3" width="62.4" height="85.7"/><line x1="705.4" y1="319.4" x2="767.8" y2="319.4"/></g><text x="736.3" y="309.3" text-anchor="middle" font-family='"Liberation Sans",sans-serif' font-size="4.2" fill="#8a8a8a" textLength="11.5" lengthAdjust="spacingAndGlyphs">Blank</text></svg></div>
<div class="lbl" style="left:696.0px;top:400.1px;width:80px">Blank</div>
<div style="position:absolute;left:136.4px;top:296.4px;width:79.2px;height:101.2px;border:2.3px solid #f8c81c;border-radius:2.2px"></div>

<div id="bottombar">
<div class="btn" style="left:10.5px;width:72px;padding-right:6px">Open Recent</div>
<svg style="position:absolute;left:75.5px;top:10.5px" width="5" height="4" viewBox="0 0 5 4"><path d="M0.6 0.8L2.5 2.8L4.4 0.8" fill="none" stroke="#444" stroke-width="0.9"/></svg>
<div class="btn" style="left:87px;width:94px">Open an Existing File…</div>
<svg style="position:absolute;left:396px;top:6px" width="86" height="14" viewBox="396 480 86 14">
<rect x="397.8" y="484.9" width="5.4" height="3.8" rx="0.4" fill="#444"/><rect x="398.6" y="485.7" width="1.6" height="2.2" fill="#dcdcdc"/><rect x="400.9" y="485.7" width="1.6" height="2.2" fill="#dcdcdc"/>
<rect x="408" y="485.8" width="57.6" height="2.4" rx="1.2" fill="#7c7c7c"/>
<circle cx="441.3" cy="487" r="3.3" fill="#f6f6f6" stroke="#9c9c9c" stroke-width="0.6"/><circle cx="441.3" cy="487" r="0.8" fill="#c4c4c4"/>
<rect x="470" y="483" width="9.4" height="7" rx="0.4" fill="#1c1c1c"/>
<rect x="470.9" y="483.9" width="7.6" height="5.2" fill="#ececec"/>
<path d="M474.7 484.2 a1.15 1.25 0 1 1 -0.01 0z M472.6 489.2 q0.1 -2.3 2.1 -2.6 q2 0.3 2.1 2.6z" fill="#1c1c1c"/>
</svg>

<div class="btn" style="left:695.5px;width:44px">Cancel</div>
<div class="btn" style="left:744px;width:44.5px">Choose</div>
</div>
</div>
</body></html>
